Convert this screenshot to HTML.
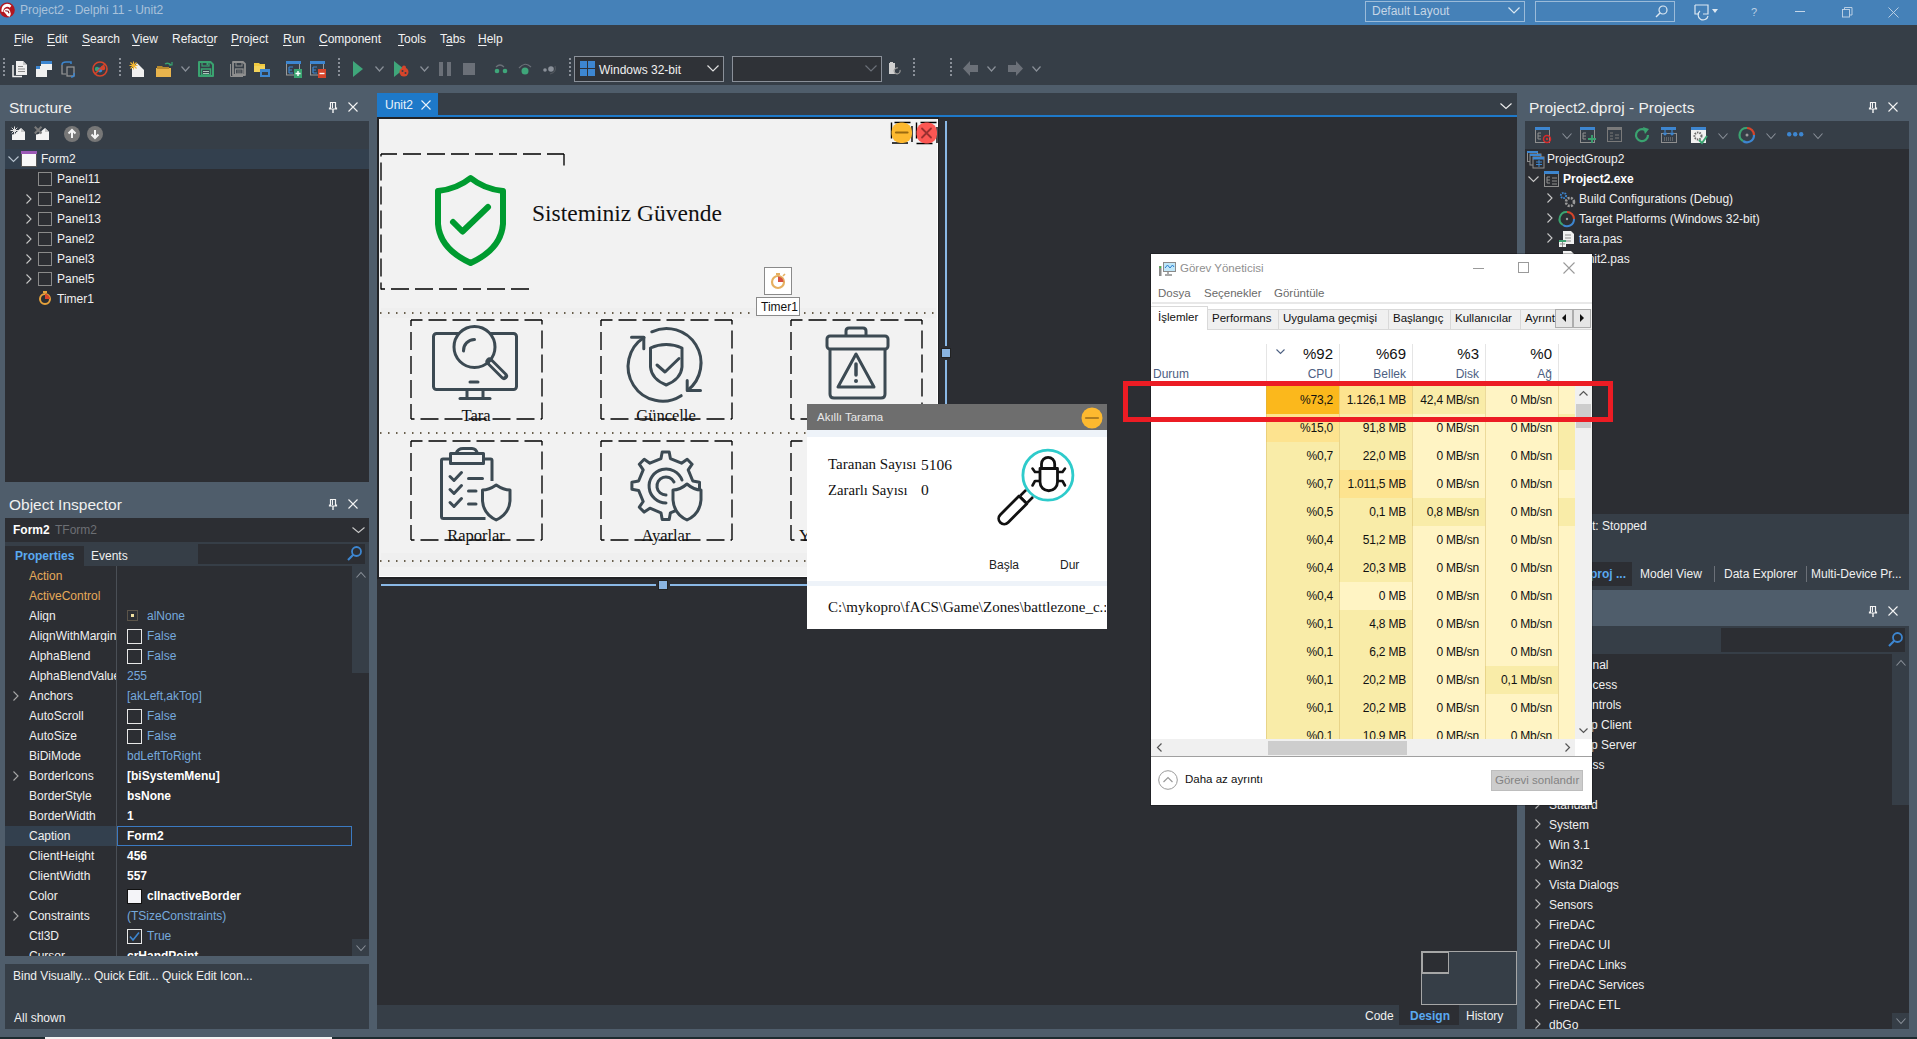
<!DOCTYPE html>
<html><head><meta charset="utf-8">
<style>
*{box-sizing:border-box;margin:0;padding:0}
html,body{width:1917px;height:1039px;overflow:hidden}
body{position:relative;background:#4f5d6b;font-family:"Liberation Sans",sans-serif;font-size:12px;color:#f0f0f0}
.a{position:absolute}
.t{position:absolute;white-space:nowrap;line-height:1}
svg{position:absolute;overflow:visible}
</style></head><body>
<div class="a" style="left:0px;top:0px;width:1917px;height:25px;background:#4581b8;"></div>
<svg style="left:0px;top:2px;" width="16" height="17" viewBox="0 0 16 17"><circle cx="7.2" cy="8" r="7.6" fill="#b3161f"/><path d="M1.3 9.5 Q1.2 2.5 7 1.8 Q10 1.8 11.4 3.8 L9.8 5.8 Q8.2 4.5 6.2 5 Q3.2 6 3.2 10 Z" fill="#fff"/><path d="M3.6 9.5 Q4.5 6.5 7.3 6.6 Q9.8 7 10.2 9.5 L10.8 12 L9.8 14.8 L7.5 14 L5.5 11.5 Z" fill="#fff"/><path d="M5.2 8.8 L8.2 9.3 L9 11.2" fill="none" stroke="#8a0d14" stroke-width="1.1"/></svg>
<div class="t" style="left:20px;top:3.84px;font-size:12px;color:#aac2da;font-weight:normal;font-family:'Liberation Sans',sans-serif;">Project2 - Delphi 11 - Unit2</div>
<div class="a" style="left:1365px;top:1px;width:160px;height:21px;border:1px solid #9bbbd9;"></div>
<div class="t" style="left:1372px;top:4.84px;font-size:12px;color:#c6d6e6;font-weight:normal;font-family:'Liberation Sans',sans-serif;">Default Layout</div>
<svg style="left:1508px;top:7px;" width="12" height="7" viewBox="0 0 12 7"><path d="M0.5 0.5 L6 6 L11.5 0.5" fill="none" stroke="#dce8f2" stroke-width="1.2"/></svg>
<div class="a" style="left:1535px;top:1px;width:140px;height:21px;border:1px solid #9bbbd9;"></div>
<svg style="left:1655px;top:5px;" width="13" height="13" viewBox="0 0 13 13"><circle cx="8" cy="5" r="4" fill="none" stroke="#dce8f2" stroke-width="1.2"/><path d="M5 8 L1 12" stroke="#dce8f2" stroke-width="1.5"/></svg>
<svg style="left:1694px;top:4px;" width="26" height="16" viewBox="0 0 26 16"><path d="M1 1 H14 V10 H9" fill="none" stroke="#dce8f2" stroke-width="1.2"/><path d="M1 1 V10 H5" fill="none" stroke="#dce8f2" stroke-width="1.2"/><path d="M6 7 A5 5 0 1 0 14 12" fill="none" stroke="#dce8f2" stroke-width="1.2"/><path d="M18 5 H24 L21 9 Z" fill="#dce8f2"/></svg>
<div class="t" style="left:1751px;top:6.69px;font-size:11px;color:#bcd0e4;font-weight:normal;font-family:'Liberation Sans',sans-serif;">?</div>
<div class="a" style="left:1795px;top:11px;width:10px;height:1px;background:#c4d6e8;"></div>
<svg style="left:1842px;top:7px;" width="11" height="11" viewBox="0 0 11 11"><rect x="0.5" y="2.5" width="7" height="7.5" fill="none" stroke="#c4d6e8" stroke-width="0.9"/><path d="M2.5 2.5 V0.5 H10 V8 H7.5" fill="none" stroke="#c4d6e8" stroke-width="0.9"/></svg>
<svg style="left:1888px;top:7px;" width="11" height="11" viewBox="0 0 11 11"><path d="M0.5 0.5 L10.5 10.5 M10.5 0.5 L0.5 10.5" stroke="#c4d6e8" stroke-width="0.9"/></svg>
<div class="a" style="left:0px;top:25px;width:1917px;height:60px;background:#363e47;"></div>
<div class="t" style="left:14px;top:32.84px;font-size:12px;color:#f2f2f2;font-weight:normal;font-family:'Liberation Sans',sans-serif;"><span style="text-decoration:underline;text-underline-offset:2px">F</span>ile</div>
<div class="t" style="left:47px;top:32.84px;font-size:12px;color:#f2f2f2;font-weight:normal;font-family:'Liberation Sans',sans-serif;"><span style="text-decoration:underline;text-underline-offset:2px">E</span>dit</div>
<div class="t" style="left:82px;top:32.84px;font-size:12px;color:#f2f2f2;font-weight:normal;font-family:'Liberation Sans',sans-serif;"><span style="text-decoration:underline;text-underline-offset:2px">S</span>earch</div>
<div class="t" style="left:132px;top:32.84px;font-size:12px;color:#f2f2f2;font-weight:normal;font-family:'Liberation Sans',sans-serif;"><span style="text-decoration:underline;text-underline-offset:2px">V</span>iew</div>
<div class="t" style="left:172px;top:32.84px;font-size:12px;color:#f2f2f2;font-weight:normal;font-family:'Liberation Sans',sans-serif;">Refact<span style="text-decoration:underline;text-underline-offset:2px">o</span>r</div>
<div class="t" style="left:231px;top:32.84px;font-size:12px;color:#f2f2f2;font-weight:normal;font-family:'Liberation Sans',sans-serif;"><span style="text-decoration:underline;text-underline-offset:2px">P</span>roject</div>
<div class="t" style="left:283px;top:32.84px;font-size:12px;color:#f2f2f2;font-weight:normal;font-family:'Liberation Sans',sans-serif;"><span style="text-decoration:underline;text-underline-offset:2px">R</span>un</div>
<div class="t" style="left:319px;top:32.84px;font-size:12px;color:#f2f2f2;font-weight:normal;font-family:'Liberation Sans',sans-serif;"><span style="text-decoration:underline;text-underline-offset:2px">C</span>omponent</div>
<div class="t" style="left:398px;top:32.84px;font-size:12px;color:#f2f2f2;font-weight:normal;font-family:'Liberation Sans',sans-serif;"><span style="text-decoration:underline;text-underline-offset:2px">T</span>ools</div>
<div class="t" style="left:440px;top:32.84px;font-size:12px;color:#f2f2f2;font-weight:normal;font-family:'Liberation Sans',sans-serif;">T<span style="text-decoration:underline;text-underline-offset:2px">a</span>bs</div>
<div class="t" style="left:478px;top:32.84px;font-size:12px;color:#f2f2f2;font-weight:normal;font-family:'Liberation Sans',sans-serif;"><span style="text-decoration:underline;text-underline-offset:2px">H</span>elp</div>
<div class="a" style="left:3px;top:58px;width:2px;height:2px;background:#8a9099;"></div>
<div class="a" style="left:3px;top:62px;width:2px;height:2px;background:#8a9099;"></div>
<div class="a" style="left:3px;top:66px;width:2px;height:2px;background:#8a9099;"></div>
<div class="a" style="left:3px;top:70px;width:2px;height:2px;background:#8a9099;"></div>
<div class="a" style="left:3px;top:74px;width:2px;height:2px;background:#8a9099;"></div>
<div class="a" style="left:119px;top:58px;width:2px;height:2px;background:#8a9099;"></div>
<div class="a" style="left:119px;top:62px;width:2px;height:2px;background:#8a9099;"></div>
<div class="a" style="left:119px;top:66px;width:2px;height:2px;background:#8a9099;"></div>
<div class="a" style="left:119px;top:70px;width:2px;height:2px;background:#8a9099;"></div>
<div class="a" style="left:119px;top:74px;width:2px;height:2px;background:#8a9099;"></div>
<div class="a" style="left:338px;top:58px;width:2px;height:2px;background:#8a9099;"></div>
<div class="a" style="left:338px;top:62px;width:2px;height:2px;background:#8a9099;"></div>
<div class="a" style="left:338px;top:66px;width:2px;height:2px;background:#8a9099;"></div>
<div class="a" style="left:338px;top:70px;width:2px;height:2px;background:#8a9099;"></div>
<div class="a" style="left:338px;top:74px;width:2px;height:2px;background:#8a9099;"></div>
<div class="a" style="left:569px;top:58px;width:2px;height:2px;background:#8a9099;"></div>
<div class="a" style="left:569px;top:62px;width:2px;height:2px;background:#8a9099;"></div>
<div class="a" style="left:569px;top:66px;width:2px;height:2px;background:#8a9099;"></div>
<div class="a" style="left:569px;top:70px;width:2px;height:2px;background:#8a9099;"></div>
<div class="a" style="left:569px;top:74px;width:2px;height:2px;background:#8a9099;"></div>
<div class="a" style="left:913px;top:58px;width:2px;height:2px;background:#8a9099;"></div>
<div class="a" style="left:913px;top:62px;width:2px;height:2px;background:#8a9099;"></div>
<div class="a" style="left:913px;top:66px;width:2px;height:2px;background:#8a9099;"></div>
<div class="a" style="left:913px;top:70px;width:2px;height:2px;background:#8a9099;"></div>
<div class="a" style="left:913px;top:74px;width:2px;height:2px;background:#8a9099;"></div>
<div class="a" style="left:950px;top:58px;width:2px;height:2px;background:#8a9099;"></div>
<div class="a" style="left:950px;top:62px;width:2px;height:2px;background:#8a9099;"></div>
<div class="a" style="left:950px;top:66px;width:2px;height:2px;background:#8a9099;"></div>
<div class="a" style="left:950px;top:70px;width:2px;height:2px;background:#8a9099;"></div>
<div class="a" style="left:950px;top:74px;width:2px;height:2px;background:#8a9099;"></div>
<svg style="left:12px;top:61px;" width="16" height="16" viewBox="0 0 16 16"><path d="M1 4 V15.5 H10" fill="none" stroke="#f0f0f0" stroke-width="1.5"/><path d="M4 0 H11 L15 4 V14 H4 Z" fill="#f0f0f0"/><path d="M11 0 V4 H15" fill="#c8c8c8"/><path d="M6 5.5 H11 M6 8 H13 M6 10.5 H13" stroke="#8a8a8a" stroke-width="1"/></svg>
<svg style="left:36px;top:61px;" width="16" height="16" viewBox="0 0 16 16"><rect x="5" y="0" width="11" height="9" fill="#f0f0f0"/><rect x="5" y="0" width="11" height="3" fill="#3d86d0"/><rect x="0" y="5" width="11" height="11" fill="#f0f0f0"/><rect x="0" y="5" width="4" height="3" fill="#3d86d0"/></svg>
<svg style="left:60px;top:61px;" width="17" height="17" viewBox="0 0 17 17"><path d="M2 4 V13 H6" fill="none" stroke="#9a9a9a" stroke-width="1.2"/><path d="M2 4 Q2 1 6 1 H11 V3" fill="none" stroke="#3d86d0" stroke-width="1.5"/><rect x="7" y="6" width="7" height="9" fill="none" stroke="#9a9a9a" stroke-width="1.2"/><path d="M14 12 Q15 16 11 16" fill="none" stroke="#3d86d0" stroke-width="1.5"/></svg>
<svg style="left:92px;top:61px;" width="16" height="16" viewBox="0 0 16 16"><circle cx="8" cy="8" r="7" fill="none" stroke="#d6452b" stroke-width="1.6"/><circle cx="5" cy="8" r="2.2" fill="#3aa370"/><circle cx="8" cy="9" r="2.4" fill="#3d86d0"/><circle cx="11" cy="7" r="2.3" fill="#d6452b"/><path d="M3 13 L13 3" stroke="#d6452b" stroke-width="1.6"/></svg>
<svg style="left:129px;top:61px;" width="16" height="16" viewBox="0 0 16 16"><path d="M3 7 H9 L15 12 V16 H3 Z" fill="#f0f0f0"/><path d="M8 2 L15 9 V16 H3 V9" fill="#f0f0f0"/><path d="M4.5 0.5 V8.5 M0.5 4.5 H8.5 M1.5 1.5 L7.5 7.5 M7.5 1.5 L1.5 7.5" stroke="#f2b632" stroke-width="1.1"/></svg>
<svg style="left:156px;top:61px;" width="17" height="17" viewBox="0 0 17 17"><path d="M0 7 H15 V16 H0 Z" fill="#e8b44d"/><path d="M1 5 H6 L7 6 H13 V8 H1 Z" fill="#b88a2e"/><path d="M9 3 Q12 1 15 4" fill="none" stroke="#3aa370" stroke-width="1.4"/><path d="M13 4 H16 V1" fill="none" stroke="#3aa370" stroke-width="1.2"/></svg>
<svg style="left:181px;top:66px;" width="9" height="6" viewBox="0 0 9 6"><path d="M0.5 0.5 L4.5 5 L8.5 0.5" fill="none" stroke="#8a9099" stroke-width="1.2"/></svg>
<svg style="left:198px;top:61px;" width="16" height="16" viewBox="0 0 16 16"><path d="M1 1 H12.5 L15 3.5 V15 H1 Z" fill="none" stroke="#3aa370" stroke-width="2" stroke-linejoin="round"/><rect x="4" y="1" width="7" height="4" fill="none" stroke="#3aa370" stroke-width="1.2"/><rect x="8.5" y="2" width="1.5" height="2" fill="#3aa370"/><rect x="3.5" y="8" width="9" height="6" fill="none" stroke="#3aa370" stroke-width="1.5"/><path d="M5 10.5 H11 M5 12.5 H11" stroke="#c8e8d8" stroke-width="0.8"/></svg>
<svg style="left:230px;top:61px;" width="16" height="16" viewBox="0 0 16 16"><path d="M0.5 3 V15.5 H13" fill="none" stroke="#8f8f8f" stroke-width="1"/><path d="M3 1 H13 L15 3 V14 H3 Z" fill="none" stroke="#8f8f8f" stroke-width="1.8" stroke-linejoin="round"/><rect x="6" y="1.5" width="6" height="3.5" fill="none" stroke="#8f8f8f" stroke-width="1"/><rect x="5.5" y="8" width="7.5" height="5" fill="none" stroke="#8f8f8f" stroke-width="1.3"/><path d="M7 10 H11.5 M7 12 H11.5" stroke="#8f8f8f" stroke-width="0.8"/></svg>
<svg style="left:254px;top:61px;" width="16" height="16" viewBox="0 0 16 16"><path d="M0 2 H5 L6 3 H11 V11 H0 Z" fill="#f0c940"/><rect x="0" y="5" width="11" height="6" fill="#f3d35a"/><rect x="6" y="8" width="10" height="8" fill="#3d86d0"/><rect x="8" y="11" width="6" height="3" fill="#363e47"/></svg>
<svg style="left:286px;top:61px;" width="16" height="17" viewBox="0 0 16 17"><rect x="0.5" y="1" width="13" height="13" fill="none" stroke="#9a9a9a"/><rect x="0" y="0" width="15" height="3" fill="#3d86d0"/><path d="M3 6 H7 M3 9 H6 M3 12 H7 M3 6 V12" stroke="#3d86d0" stroke-width="1.2"/><rect x="8" y="8" width="8" height="9" fill="#3aa370"/><path d="M12 10 V15 M9.5 12.5 H14.5" stroke="#fff" stroke-width="1.4"/></svg>
<svg style="left:310px;top:61px;" width="16" height="17" viewBox="0 0 16 17"><rect x="0.5" y="1" width="13" height="13" fill="none" stroke="#9a9a9a"/><rect x="0" y="0" width="15" height="3" fill="#3d86d0"/><path d="M3 6 H7 M3 9 H6 M3 12 H7 M3 6 V12" stroke="#3d86d0" stroke-width="1.2"/><rect x="8" y="8" width="8" height="9" fill="#d6452b"/><path d="M9.5 12.5 H14.5" stroke="#fff" stroke-width="1.4"/></svg>
<svg style="left:353px;top:61px;" width="11" height="16" viewBox="0 0 11 16"><path d="M0 0 L10 8 L0 16 Z" fill="#3fa67a"/></svg>
<svg style="left:375px;top:66px;" width="9" height="6" viewBox="0 0 9 6"><path d="M0.5 0.5 L4.5 5 L8.5 0.5" fill="none" stroke="#8a9099" stroke-width="1.2"/></svg>
<svg style="left:394px;top:61px;" width="16" height="16" viewBox="0 0 16 16"><path d="M0 0 L10 8 L0 16 Z" fill="#3fa67a"/><circle cx="10" cy="11" r="4.5" fill="#d6452b"/><circle cx="10" cy="6.5" r="2" fill="#d6452b"/><circle cx="8.5" cy="10" r="1" fill="#363e47"/><circle cx="11.5" cy="12" r="1" fill="#363e47"/></svg>
<svg style="left:420px;top:66px;" width="9" height="6" viewBox="0 0 9 6"><path d="M0.5 0.5 L4.5 5 L8.5 0.5" fill="none" stroke="#8a9099" stroke-width="1.2"/></svg>
<div class="a" style="left:439px;top:62px;width:4px;height:14px;background:#6b7078;"></div>
<div class="a" style="left:447px;top:62px;width:4px;height:14px;background:#6b7078;"></div>
<div class="a" style="left:463px;top:63px;width:12px;height:12px;background:#6b7078;"></div>
<svg style="left:494px;top:61px;" width="15" height="16" viewBox="0 0 15 16"><circle cx="3" cy="10" r="2.3" fill="#3fa67a"/><circle cx="11" cy="10" r="2.3" fill="#3fa67a"/><path d="M2 6 Q6 2 10 6" fill="none" stroke="#6b7078" stroke-width="1.2"/></svg>
<svg style="left:518px;top:61px;" width="15" height="16" viewBox="0 0 15 16"><circle cx="7" cy="10" r="3.5" fill="#3fa67a"/><path d="M1 7 Q7 0 13 6" fill="none" stroke="#6b7078" stroke-width="1.2"/></svg>
<svg style="left:542px;top:61px;" width="15" height="16" viewBox="0 0 15 16"><circle cx="3" cy="9" r="1.8" fill="#8a9099"/><circle cx="9" cy="8" r="2.8" fill="#8a9099"/><path d="M13 5 Q15 11 8 13" fill="none" stroke="#50565d" stroke-width="1.2"/></svg>
<div class="a" style="left:574px;top:56px;width:150px;height:26px;background:#2f3237;border:1px solid #8a9099"></div>
<svg style="left:580px;top:61px;" width="16" height="16" viewBox="0 0 16 16"><rect x="0" y="0" width="7" height="7" fill="#3d86d0"/><rect x="8" y="0" width="7" height="7" fill="#3d86d0"/><rect x="0" y="8" width="7" height="7" fill="#3d86d0"/><rect x="8" y="8" width="7" height="7" fill="#3d86d0"/></svg>
<div class="t" style="left:599px;top:63.84px;font-size:12px;color:#f0f0f0;font-weight:normal;font-family:'Liberation Sans',sans-serif;">Windows 32-bit</div>
<svg style="left:707px;top:65px;" width="12" height="7" viewBox="0 0 12 7"><path d="M0.5 0.5 L6 6 L11.5 0.5" fill="none" stroke="#e0e0e0" stroke-width="1.2"/></svg>
<div class="a" style="left:732px;top:56px;width:150px;height:26px;background:#2f3237;border:1px solid #8a9099"></div>
<svg style="left:865px;top:65px;" width="12" height="7" viewBox="0 0 12 7"><path d="M0.5 0.5 L6 6 L11.5 0.5" fill="none" stroke="#6b7078" stroke-width="1.2"/></svg>
<svg style="left:889px;top:62px;" width="14" height="14" viewBox="0 0 14 14"><rect x="0" y="1" width="6" height="11" fill="#d0d0d0"/><rect x="1" y="0" width="3" height="2" fill="#d0d0d0"/><path d="M11 8 A3 3 0 1 1 9 6" fill="none" stroke="#9a9a9a" stroke-width="1.2"/></svg>
<svg style="left:963px;top:61px;" width="16" height="15" viewBox="0 0 16 15"><path d="M0 7.5 L7 0 V4 H15 V11 H7 V15 Z" fill="#6b7078"/></svg>
<svg style="left:987px;top:66px;" width="9" height="6" viewBox="0 0 9 6"><path d="M0.5 0.5 L4.5 5 L8.5 0.5" fill="none" stroke="#8a9099" stroke-width="1.2"/></svg>
<svg style="left:1007px;top:61px;" width="16" height="15" viewBox="0 0 16 15"><path d="M16 7.5 L9 0 V4 H1 V11 H9 V15 Z" fill="#6b7078"/></svg>
<svg style="left:1032px;top:66px;" width="9" height="6" viewBox="0 0 9 6"><path d="M0.5 0.5 L4.5 5 L8.5 0.5" fill="none" stroke="#8a9099" stroke-width="1.2"/></svg>
<div class="t" style="left:9px;top:99.88px;font-size:15.5px;color:#f0f0f0;font-weight:normal;font-family:'Liberation Sans',sans-serif;">Structure</div>
<svg style="left:329px;top:102px;" width="8" height="11" viewBox="0 0 8 11"><path d="M1.5 0.5 H6.5 V6 H7.5 V7 H0.5 V6 H1.5 Z" fill="none" stroke="#f4f4f4" stroke-width="1.2"/><path d="M4 7 V11" stroke="#f4f4f4" stroke-width="1.4"/><path d="M3.5 1 V6" stroke="#f4f4f4" stroke-width="1"/></svg>
<svg style="left:348px;top:102px;" width="10" height="10" viewBox="0 0 10 10"><path d="M0.5 0.5 L9.5 9.5 M9.5 0.5 L0.5 9.5" stroke="#f4f4f4" stroke-width="1.1"/></svg>
<div class="a" style="left:5px;top:121px;width:364px;height:28px;background:#363e47;"></div>
<svg style="left:10px;top:126px;" width="16" height="16" viewBox="0 0 16 16"><path d="M2 14 V8.5 Q6 8.5 8 4.5 L11 2 L15 6 V14 Z" fill="#f4f4f4"/><path d="M11 2 V6 H15 Z" fill="#c8c8c8"/><path d="M4.5 0.5 V8.5 M0.5 4.5 H8.5 M1.7 1.7 L7.3 7.3 M7.3 1.7 L1.7 7.3" stroke="#e0e0e0" stroke-width="1"/></svg>
<svg style="left:34px;top:126px;" width="16" height="16" viewBox="0 0 16 16"><path d="M2 14 V8.5 Q6 8.5 8 4.5 L11 2 L15 6 V14 Z" fill="#f4f4f4"/><path d="M11 2 V6 H15 Z" fill="#c8c8c8"/><path d="M0.8 0.8 L7.5 7.5 M7.5 0.8 L0.8 7.5" stroke="#7a7a7a" stroke-width="2"/></svg>
<svg style="left:64px;top:126px;" width="16" height="16" viewBox="0 0 16 16"><circle cx="8" cy="8" r="8" fill="#777777"/><path d="M8 12 V4 M4.5 7.5 L8 4 L11.5 7.5" fill="none" stroke="#f4f4f4" stroke-width="2"/></svg>
<svg style="left:87px;top:126px;" width="16" height="16" viewBox="0 0 16 16"><circle cx="8" cy="8" r="8" fill="#777777"/><path d="M8 4 V12 M4.5 8.5 L8 12 L11.5 8.5" fill="none" stroke="#f4f4f4" stroke-width="2"/></svg>
<div class="a" style="left:5px;top:149px;width:364px;height:333px;background:#2c2e33;"></div>
<div class="a" style="left:5px;top:149px;width:364px;height:20px;background:#33404e;"></div>
<svg style="left:8px;top:156px;" width="11" height="6" viewBox="0 0 11 6"><path d="M0.5 0.5 L5.5 5.5 L10.5 0.5" fill="none" stroke="#b8c4d0" stroke-width="1.1"/></svg>
<div class="a" style="left:21px;top:151px;width:16px;height:16px;background:#f8f8f8;border:1px solid #555"></div>
<div class="a" style="left:21px;top:151px;width:16px;height:3px;background:#9b59b6;"></div>
<div class="t" style="left:41px;top:152.84px;font-size:12px;color:#f0f0f0;font-weight:normal;font-family:'Liberation Sans',sans-serif;">Form2</div>
<div class="a" style="left:38px;top:172px;width:14px;height:14px;border:1px solid #8a8a8a;"></div>
<div class="t" style="left:57px;top:172.84px;font-size:12px;color:#f0f0f0;font-weight:normal;font-family:'Liberation Sans',sans-serif;">Panel11</div>
<svg style="left:26px;top:194px;" width="6" height="10" viewBox="0 0 6 10"><path d="M0.5 0.5 L5 5 L0.5 9.5" fill="none" stroke="#c8c8c8" stroke-width="1.1"/></svg>
<div class="a" style="left:38px;top:192px;width:14px;height:14px;border:1px solid #8a8a8a;"></div>
<div class="t" style="left:57px;top:192.84px;font-size:12px;color:#f0f0f0;font-weight:normal;font-family:'Liberation Sans',sans-serif;">Panel12</div>
<svg style="left:26px;top:214px;" width="6" height="10" viewBox="0 0 6 10"><path d="M0.5 0.5 L5 5 L0.5 9.5" fill="none" stroke="#c8c8c8" stroke-width="1.1"/></svg>
<div class="a" style="left:38px;top:212px;width:14px;height:14px;border:1px solid #8a8a8a;"></div>
<div class="t" style="left:57px;top:212.84px;font-size:12px;color:#f0f0f0;font-weight:normal;font-family:'Liberation Sans',sans-serif;">Panel13</div>
<svg style="left:26px;top:234px;" width="6" height="10" viewBox="0 0 6 10"><path d="M0.5 0.5 L5 5 L0.5 9.5" fill="none" stroke="#c8c8c8" stroke-width="1.1"/></svg>
<div class="a" style="left:38px;top:232px;width:14px;height:14px;border:1px solid #8a8a8a;"></div>
<div class="t" style="left:57px;top:232.84px;font-size:12px;color:#f0f0f0;font-weight:normal;font-family:'Liberation Sans',sans-serif;">Panel2</div>
<svg style="left:26px;top:254px;" width="6" height="10" viewBox="0 0 6 10"><path d="M0.5 0.5 L5 5 L0.5 9.5" fill="none" stroke="#c8c8c8" stroke-width="1.1"/></svg>
<div class="a" style="left:38px;top:252px;width:14px;height:14px;border:1px solid #8a8a8a;"></div>
<div class="t" style="left:57px;top:252.84px;font-size:12px;color:#f0f0f0;font-weight:normal;font-family:'Liberation Sans',sans-serif;">Panel3</div>
<svg style="left:26px;top:274px;" width="6" height="10" viewBox="0 0 6 10"><path d="M0.5 0.5 L5 5 L0.5 9.5" fill="none" stroke="#c8c8c8" stroke-width="1.1"/></svg>
<div class="a" style="left:38px;top:272px;width:14px;height:14px;border:1px solid #8a8a8a;"></div>
<div class="t" style="left:57px;top:272.84px;font-size:12px;color:#f0f0f0;font-weight:normal;font-family:'Liberation Sans',sans-serif;">Panel5</div>
<svg style="left:38px;top:291px;" width="14" height="14" viewBox="0 0 14 14"><circle cx="7" cy="8" r="5" fill="none" stroke="#e6a23c" stroke-width="2"/><path d="M7 8 V3 A5 5 0 0 1 12 8 Z" fill="#d6452b"/><rect x="5" y="0" width="4" height="2" fill="#e6a23c"/></svg>
<div class="t" style="left:57px;top:292.84px;font-size:12px;color:#f0f0f0;font-weight:normal;font-family:'Liberation Sans',sans-serif;">Timer1</div>
<div class="t" style="left:9px;top:496.88px;font-size:15.5px;color:#f0f0f0;font-weight:normal;font-family:'Liberation Sans',sans-serif;">Object Inspector</div>
<svg style="left:329px;top:499px;" width="8" height="11" viewBox="0 0 8 11"><path d="M1.5 0.5 H6.5 V6 H7.5 V7 H0.5 V6 H1.5 Z" fill="none" stroke="#f4f4f4" stroke-width="1.2"/><path d="M4 7 V11" stroke="#f4f4f4" stroke-width="1.4"/><path d="M3.5 1 V6" stroke="#f4f4f4" stroke-width="1"/></svg>
<svg style="left:348px;top:499px;" width="10" height="10" viewBox="0 0 10 10"><path d="M0.5 0.5 L9.5 9.5 M9.5 0.5 L0.5 9.5" stroke="#f4f4f4" stroke-width="1.1"/></svg>
<div class="a" style="left:5px;top:518px;width:364px;height:24px;background:#2c2e33;"></div>
<div class="t" style="left:13px;top:523.84px;font-size:12px;color:#ffffff;font-weight:bold;font-family:'Liberation Sans',sans-serif;">Form2</div>
<div class="t" style="left:55px;top:523.84px;font-size:12px;color:#6c6f74;font-weight:normal;font-family:'Liberation Sans',sans-serif;">TForm2</div>
<svg style="left:352px;top:527px;" width="13" height="6" viewBox="0 0 13 6"><path d="M0.5 0.5 L6.5 5.5 L12.5 0.5" fill="none" stroke="#c8c8c8" stroke-width="1.1"/></svg>
<div class="a" style="left:5px;top:542px;width:364px;height:24px;background:#363e47;"></div>
<div class="a" style="left:5px;top:546px;width:79px;height:20px;background:#2c2e33;"></div>
<div class="t" style="left:15px;top:549.84px;font-size:12px;color:#5aa9f0;font-weight:bold;font-family:'Liberation Sans',sans-serif;">Properties</div>
<div class="t" style="left:91px;top:549.84px;font-size:12px;color:#f0f0f0;font-weight:normal;font-family:'Liberation Sans',sans-serif;">Events</div>
<div class="a" style="left:198px;top:544px;width:167px;height:20px;background:#2c2e33;"></div>
<svg style="left:347px;top:546px;" width="15" height="15" viewBox="0 0 15 15"><circle cx="9.5" cy="5.5" r="4.5" fill="none" stroke="#3d86d0" stroke-width="1.8"/><path d="M6.5 8.5 L1 14" stroke="#3d86d0" stroke-width="2.2"/></svg>
<div class="a" style="left:5px;top:566px;width:364px;height:390px;background:#2c2e33;"></div>
<div class="a" style="left:116px;top:566px;width:1px;height:390px;background:#4a4f56;"></div>
<div class="a" style="left:352px;top:566px;width:17px;height:107px;background:#363e47;"></div>
<svg style="left:356px;top:572px;" width="10" height="6" viewBox="0 0 10 6"><path d="M0.5 5.5 L5.0 0.5 L9.5 5.5" fill="none" stroke="#8a9099" stroke-width="1.1"/></svg>
<div class="a" style="left:352px;top:939px;width:17px;height:17px;background:#363e47;"></div>
<svg style="left:356px;top:945px;" width="10" height="6" viewBox="0 0 10 6"><path d="M0.5 0.5 L5.0 5.5 L9.5 0.5" fill="none" stroke="#8a9099" stroke-width="1.1"/></svg>
<div class="a" style="left:5px;top:566px;width:347px;height:390px;overflow:hidden">
<div class="t" style="left:24px;top:3.84px;font-size:12px;color:#e6aa5a;font-weight:normal;font-family:'Liberation Sans',sans-serif;width:87px;overflow:hidden">Action</div>
<div class="t" style="left:24px;top:23.84px;font-size:12px;color:#e6aa5a;font-weight:normal;font-family:'Liberation Sans',sans-serif;width:87px;overflow:hidden">ActiveControl</div>
<div class="t" style="left:24px;top:43.84px;font-size:12px;color:#f0f0f0;font-weight:normal;font-family:'Liberation Sans',sans-serif;width:87px;overflow:hidden">Align</div>
<svg style="left:122px;top:44px;" width="11" height="11" viewBox="0 0 11 11"><rect x="0.5" y="0.5" width="10" height="10" fill="none" stroke="#8a7a60" stroke-dasharray="1 1"/><rect x="4" y="4" width="3" height="3" fill="#f0e0a0"/></svg>
<div class="t" style="left:142px;top:43.84px;font-size:12px;color:#76a9dc;font-weight:normal;font-family:'Liberation Sans',sans-serif;">alNone</div>
<div class="t" style="left:24px;top:63.84px;font-size:12px;color:#f0f0f0;font-weight:normal;font-family:'Liberation Sans',sans-serif;width:87px;overflow:hidden">AlignWithMargins</div>
<div class="a" style="left:122px;top:63px;width:15px;height:15px;border:1px solid #e8e8e8;"></div>
<div class="t" style="left:142px;top:63.84px;font-size:12px;color:#76a9dc;font-weight:normal;font-family:'Liberation Sans',sans-serif;">False</div>
<div class="t" style="left:24px;top:83.84px;font-size:12px;color:#f0f0f0;font-weight:normal;font-family:'Liberation Sans',sans-serif;width:87px;overflow:hidden">AlphaBlend</div>
<div class="a" style="left:122px;top:83px;width:15px;height:15px;border:1px solid #e8e8e8;"></div>
<div class="t" style="left:142px;top:83.84px;font-size:12px;color:#76a9dc;font-weight:normal;font-family:'Liberation Sans',sans-serif;">False</div>
<div class="t" style="left:24px;top:103.84px;font-size:12px;color:#f0f0f0;font-weight:normal;font-family:'Liberation Sans',sans-serif;width:87px;overflow:hidden">AlphaBlendValue</div>
<div class="t" style="left:122px;top:103.84px;font-size:12px;color:#76a9dc;font-weight:normal;font-family:'Liberation Sans',sans-serif;">255</div>
<svg style="left:8px;top:125px;" width="6" height="10" viewBox="0 0 6 10"><path d="M0.5 0.5 L5 5 L0.5 9.5" fill="none" stroke="#a8a8a8" stroke-width="1.1"/></svg>
<div class="t" style="left:24px;top:123.84px;font-size:12px;color:#f0f0f0;font-weight:normal;font-family:'Liberation Sans',sans-serif;width:87px;overflow:hidden">Anchors</div>
<div class="t" style="left:122px;top:123.84px;font-size:12px;color:#76a9dc;font-weight:normal;font-family:'Liberation Sans',sans-serif;">[akLeft,akTop]</div>
<div class="t" style="left:24px;top:143.84px;font-size:12px;color:#f0f0f0;font-weight:normal;font-family:'Liberation Sans',sans-serif;width:87px;overflow:hidden">AutoScroll</div>
<div class="a" style="left:122px;top:143px;width:15px;height:15px;border:1px solid #e8e8e8;"></div>
<div class="t" style="left:142px;top:143.84px;font-size:12px;color:#76a9dc;font-weight:normal;font-family:'Liberation Sans',sans-serif;">False</div>
<div class="t" style="left:24px;top:163.84px;font-size:12px;color:#f0f0f0;font-weight:normal;font-family:'Liberation Sans',sans-serif;width:87px;overflow:hidden">AutoSize</div>
<div class="a" style="left:122px;top:163px;width:15px;height:15px;border:1px solid #e8e8e8;"></div>
<div class="t" style="left:142px;top:163.84px;font-size:12px;color:#76a9dc;font-weight:normal;font-family:'Liberation Sans',sans-serif;">False</div>
<div class="t" style="left:24px;top:183.84px;font-size:12px;color:#f0f0f0;font-weight:normal;font-family:'Liberation Sans',sans-serif;width:87px;overflow:hidden">BiDiMode</div>
<div class="t" style="left:122px;top:183.84px;font-size:12px;color:#76a9dc;font-weight:normal;font-family:'Liberation Sans',sans-serif;">bdLeftToRight</div>
<svg style="left:8px;top:205px;" width="6" height="10" viewBox="0 0 6 10"><path d="M0.5 0.5 L5 5 L0.5 9.5" fill="none" stroke="#a8a8a8" stroke-width="1.1"/></svg>
<div class="t" style="left:24px;top:203.84px;font-size:12px;color:#f0f0f0;font-weight:normal;font-family:'Liberation Sans',sans-serif;width:87px;overflow:hidden">BorderIcons</div>
<div class="t" style="left:122px;top:203.84px;font-size:12px;color:#ffffff;font-weight:bold;font-family:'Liberation Sans',sans-serif;">[biSystemMenu]</div>
<div class="t" style="left:24px;top:223.84px;font-size:12px;color:#f0f0f0;font-weight:normal;font-family:'Liberation Sans',sans-serif;width:87px;overflow:hidden">BorderStyle</div>
<div class="t" style="left:122px;top:223.84px;font-size:12px;color:#ffffff;font-weight:bold;font-family:'Liberation Sans',sans-serif;">bsNone</div>
<div class="t" style="left:24px;top:243.84px;font-size:12px;color:#f0f0f0;font-weight:normal;font-family:'Liberation Sans',sans-serif;width:87px;overflow:hidden">BorderWidth</div>
<div class="t" style="left:122px;top:243.84px;font-size:12px;color:#ffffff;font-weight:bold;font-family:'Liberation Sans',sans-serif;">1</div>
<div class="a" style="left:0px;top:260px;width:111px;height:20px;background:#33404e;"></div>
<div class="a" style="left:112px;top:260px;width:235px;height:20px;background:transparent;border:1px solid #3b7ac2"></div>
<div class="t" style="left:24px;top:263.84px;font-size:12px;color:#f0f0f0;font-weight:normal;font-family:'Liberation Sans',sans-serif;width:87px;overflow:hidden">Caption</div>
<div class="t" style="left:122px;top:263.84px;font-size:12px;color:#ffffff;font-weight:bold;font-family:'Liberation Sans',sans-serif;">Form2</div>
<div class="t" style="left:24px;top:283.84px;font-size:12px;color:#f0f0f0;font-weight:normal;font-family:'Liberation Sans',sans-serif;width:87px;overflow:hidden">ClientHeight</div>
<div class="t" style="left:122px;top:283.84px;font-size:12px;color:#ffffff;font-weight:bold;font-family:'Liberation Sans',sans-serif;">456</div>
<div class="t" style="left:24px;top:303.84px;font-size:12px;color:#f0f0f0;font-weight:normal;font-family:'Liberation Sans',sans-serif;width:87px;overflow:hidden">ClientWidth</div>
<div class="t" style="left:122px;top:303.84px;font-size:12px;color:#ffffff;font-weight:bold;font-family:'Liberation Sans',sans-serif;">557</div>
<div class="t" style="left:24px;top:323.84px;font-size:12px;color:#f0f0f0;font-weight:normal;font-family:'Liberation Sans',sans-serif;width:87px;overflow:hidden">Color</div>
<div class="a" style="left:122px;top:323px;width:15px;height:15px;background:#f4f4f8;border:1px solid #111"></div>
<div class="t" style="left:142px;top:323.84px;font-size:12px;color:#ffffff;font-weight:bold;font-family:'Liberation Sans',sans-serif;">clInactiveBorder</div>
<svg style="left:8px;top:345px;" width="6" height="10" viewBox="0 0 6 10"><path d="M0.5 0.5 L5 5 L0.5 9.5" fill="none" stroke="#a8a8a8" stroke-width="1.1"/></svg>
<div class="t" style="left:24px;top:343.84px;font-size:12px;color:#f0f0f0;font-weight:normal;font-family:'Liberation Sans',sans-serif;width:87px;overflow:hidden">Constraints</div>
<div class="t" style="left:122px;top:343.84px;font-size:12px;color:#76a9dc;font-weight:normal;font-family:'Liberation Sans',sans-serif;">(TSizeConstraints)</div>
<div class="t" style="left:24px;top:363.84px;font-size:12px;color:#f0f0f0;font-weight:normal;font-family:'Liberation Sans',sans-serif;width:87px;overflow:hidden">Ctl3D</div>
<div class="a" style="left:122px;top:363px;width:15px;height:15px;border:1px solid #e8e8e8;"></div>
<svg style="left:124px;top:365px;" width="11" height="11" viewBox="0 0 11 11"><path d="M1 5.5 L4 9 L10 1.5" fill="none" stroke="#3d86d0" stroke-width="1.6"/></svg>
<div class="t" style="left:142px;top:363.84px;font-size:12px;color:#76a9dc;font-weight:normal;font-family:'Liberation Sans',sans-serif;">True</div>
<div class="t" style="left:24px;top:383.84px;font-size:12px;color:#f0f0f0;font-weight:normal;font-family:'Liberation Sans',sans-serif;width:87px;overflow:hidden">Cursor</div>
<div class="t" style="left:122px;top:383.84px;font-size:12px;color:#ffffff;font-weight:bold;font-family:'Liberation Sans',sans-serif;">crHandPoint</div>
</div>
<div class="a" style="left:5px;top:964px;width:364px;height:65px;background:#363e47;"></div>
<div class="t" style="left:13px;top:969.84px;font-size:12px;color:#f0f0f0;font-weight:normal;font-family:'Liberation Sans',sans-serif;">Bind Visually...  Quick Edit...  Quick Edit Icon...</div>
<div class="t" style="left:14px;top:1011.84px;font-size:12px;color:#f0f0f0;font-weight:normal;font-family:'Liberation Sans',sans-serif;">All shown</div>
<div class="a" style="left:0px;top:1037px;width:1917px;height:2px;background:#1d2b30;"></div>
<div class="a" style="left:45px;top:1037px;width:287px;height:2px;background:#f4f4f4;"></div>
<div class="a" style="left:377px;top:93px;width:1140px;height:24px;background:#363e47;"></div>
<div class="a" style="left:377px;top:93px;width:61px;height:22px;background:#1e79c9;"></div>
<div class="t" style="left:385px;top:98.84px;font-size:12px;color:#eaf2fa;font-weight:normal;font-family:'Liberation Sans',sans-serif;">Unit2</div>
<svg style="left:421px;top:100px;" width="10" height="10" viewBox="0 0 10 10"><path d="M0.5 0.5 L9.5 9.5 M9.5 0.5 L0.5 9.5" stroke="#eaf2fa" stroke-width="1.1"/></svg>
<div class="a" style="left:377px;top:115px;width:1140px;height:2px;background:#1e79c9;"></div>
<svg style="left:1500px;top:103px;" width="12" height="6" viewBox="0 0 12 6"><path d="M0.5 0.5 L6.0 5.5 L11.5 0.5" fill="none" stroke="#f0f0f0" stroke-width="1.1"/></svg>
<div class="a" style="left:377px;top:117px;width:1140px;height:888px;background:#2c2e33;"></div>
<div class="a" style="left:377px;top:117px;width:562px;height:462px;background:#222326;"></div>
<div class="a" style="left:377px;top:1005px;width:1140px;height:24px;background:#363e47;"></div>
<div class="t" style="left:1365px;top:1009.84px;font-size:12px;color:#f0f0f0;font-weight:normal;font-family:'Liberation Sans',sans-serif;">Code</div>
<div class="a" style="left:1399px;top:1005px;width:60px;height:20px;background:#2c2e33;"></div>
<div class="t" style="left:1410px;top:1009.84px;font-size:12px;color:#5aa9f0;font-weight:bold;font-family:'Liberation Sans',sans-serif;">Design</div>
<div class="t" style="left:1466px;top:1009.84px;font-size:12px;color:#f0f0f0;font-weight:normal;font-family:'Liberation Sans',sans-serif;">History</div>
<div class="a" style="left:1421px;top:951px;width:96px;height:54px;background:#363e47;border:1px solid #a6a6a6"></div>
<div class="a" style="left:1421px;top:951px;width:28px;height:23px;background:#2c2e33;border:2px solid #a6a6a6;border-right-width:1px;border-bottom-width:2px"></div>
<div class="t" style="left:1529px;top:99.88px;font-size:15.5px;color:#f0f0f0;font-weight:normal;font-family:'Liberation Sans',sans-serif;">Project2.dproj - Projects</div>
<svg style="left:1869px;top:102px;" width="8" height="11" viewBox="0 0 8 11"><path d="M1.5 0.5 H6.5 V6 H7.5 V7 H0.5 V6 H1.5 Z" fill="none" stroke="#f4f4f4" stroke-width="1.2"/><path d="M4 7 V11" stroke="#f4f4f4" stroke-width="1.4"/><path d="M3.5 1 V6" stroke="#f4f4f4" stroke-width="1"/></svg>
<svg style="left:1888px;top:102px;" width="10" height="10" viewBox="0 0 10 10"><path d="M0.5 0.5 L9.5 9.5 M9.5 0.5 L0.5 9.5" stroke="#f4f4f4" stroke-width="1.1"/></svg>
<div class="a" style="left:1525px;top:121px;width:384px;height:28px;background:#363e47;"></div>
<svg style="left:1535px;top:127px;" width="17" height="17" viewBox="0 0 17 17"><rect x="0.5" y="1.5" width="14" height="14" fill="none" stroke="#8f8f8f"/><rect x="0" y="0" width="15" height="3" fill="#3d86d0"/><path d="M3 6 H6 M3 9 H6 M3 12 H6 M3 6 V12" stroke="#8f8f8f" stroke-width="1"/><circle cx="12" cy="12" r="3.5" fill="none" stroke="#d62b2b" stroke-width="1.5"/><circle cx="12" cy="12" r="1.2" fill="#d62b2b"/></svg>
<svg style="left:1562px;top:133px;" width="10" height="6" viewBox="0 0 10 6"><path d="M0.5 0.5 L5.0 5.5 L9.5 0.5" fill="none" stroke="#8a9099" stroke-width="1.1"/></svg>
<svg style="left:1580px;top:127px;" width="17" height="17" viewBox="0 0 17 17"><rect x="0.5" y="1.5" width="14" height="14" fill="none" stroke="#8f8f8f"/><rect x="0" y="0" width="15" height="3" fill="#3d86d0"/><path d="M3 6 H6 M3 9 H6 M3 12 H6 M3 6 V12" stroke="#8f8f8f" stroke-width="1"/><path d="M12 8 V16 M8 12 H16" stroke="#3aa370" stroke-width="1.8"/></svg>
<svg style="left:1607px;top:127px;" width="17" height="17" viewBox="0 0 17 17"><rect x="0.5" y="1.5" width="14" height="13" fill="none" stroke="#7a7a7a"/><rect x="0" y="0" width="15" height="3" fill="#7a7a7a"/><path d="M3 6 H6 M3 9 H6 M3 12 H6" stroke="#7a7a7a"/><path d="M8 8 H12 M8 11 H12" stroke="#7a7a7a"/></svg>
<svg style="left:1634px;top:127px;" width="17" height="17" viewBox="0 0 17 17"><path d="M14 8 A6 6 0 1 1 11 3" fill="none" stroke="#3aa370" stroke-width="2.2"/><path d="M9 0 L15 2 L11 7 Z" fill="#3aa370"/></svg>
<svg style="left:1661px;top:127px;" width="17" height="17" viewBox="0 0 17 17"><rect x="0.5" y="6.5" width="15" height="9" fill="none" stroke="#8f8f8f"/><rect x="0" y="0" width="15" height="3" fill="#3d86d0"/><path d="M4 3 V8 M2 6 L4 8 L6 6 M11 3 V8 M9 6 L11 8 L13 6" fill="none" stroke="#3d86d0" stroke-width="1.2"/><path d="M3 11 H13 M3 13 H13" stroke="#8f8f8f" stroke-dasharray="1 1"/></svg>
<svg style="left:1691px;top:127px;" width="17" height="17" viewBox="0 0 17 17"><rect x="0" y="1" width="15" height="15" fill="#f0f0f0"/><rect x="0" y="0" width="15" height="3" fill="#3d86d0"/><circle cx="7" cy="9" r="3.5" fill="none" stroke="#6b6b6b" stroke-width="2" stroke-dasharray="1.5 1"/><path d="M8 13 L11 16 L16 9" fill="none" stroke="#3aa370" stroke-width="2"/></svg>
<svg style="left:1718px;top:133px;" width="10" height="6" viewBox="0 0 10 6"><path d="M0.5 0.5 L5.0 5.5 L9.5 0.5" fill="none" stroke="#8a9099" stroke-width="1.1"/></svg>
<svg style="left:1739px;top:127px;" width="17" height="17" viewBox="0 0 17 17"><path d="M8 1 A7 7 0 0 1 15 8" fill="none" stroke="#d6452b" stroke-width="2.2"/><path d="M15 8 A7 7 0 0 1 4 14" fill="none" stroke="#3d86d0" stroke-width="2.2"/><path d="M4 14 A7 7 0 0 1 8 1" fill="none" stroke="#3aa370" stroke-width="2.2"/><circle cx="8" cy="8" r="1.5" fill="#9a9a9a"/></svg>
<svg style="left:1766px;top:133px;" width="10" height="6" viewBox="0 0 10 6"><path d="M0.5 0.5 L5.0 5.5 L9.5 0.5" fill="none" stroke="#8a9099" stroke-width="1.1"/></svg>
<svg style="left:1787px;top:132px;" width="5" height="5" viewBox="0 0 5 5"><circle cx="2.2" cy="2.2" r="2.2" fill="#3d86d0"/></svg>
<svg style="left:1793px;top:132px;" width="5" height="5" viewBox="0 0 5 5"><circle cx="2.2" cy="2.2" r="2.2" fill="#3d86d0"/></svg>
<svg style="left:1799px;top:132px;" width="5" height="5" viewBox="0 0 5 5"><circle cx="2.2" cy="2.2" r="2.2" fill="#3d86d0"/></svg>
<svg style="left:1813px;top:133px;" width="10" height="6" viewBox="0 0 10 6"><path d="M0.5 0.5 L5.0 5.5 L9.5 0.5" fill="none" stroke="#8a9099" stroke-width="1.1"/></svg>
<div class="a" style="left:1525px;top:149px;width:384px;height:365px;background:#2c2e33;"></div>
<svg style="left:1527px;top:151px;" width="17" height="17" viewBox="0 0 17 17"><rect x="0.5" y="0.5" width="10" height="10" fill="none" stroke="#8f8f8f"/><rect x="0" y="0" width="11" height="2" fill="#3d86d0"/><rect x="3" y="3" width="11" height="11" fill="#2c2e33" stroke="#8f8f8f"/><rect x="3" y="3" width="11" height="2" fill="#3d86d0"/><rect x="6" y="6" width="11" height="11" fill="#2c2e33" stroke="#8f8f8f"/><rect x="6" y="6" width="11" height="2.5" fill="#3d86d0"/><path d="M9 11 H15 M9 13.5 H15 M12 9 V16" stroke="#3d86d0" stroke-width="1"/></svg>
<div class="t" style="left:1547px;top:152.84px;font-size:12px;color:#f0f0f0;font-weight:normal;font-family:'Liberation Sans',sans-serif;">ProjectGroup2</div>
<svg style="left:1528px;top:176px;" width="11" height="6" viewBox="0 0 11 6"><path d="M0.5 0.5 L5.5 5.5 L10.5 0.5" fill="none" stroke="#c8c8c8" stroke-width="1.1"/></svg>
<svg style="left:1544px;top:171px;" width="17" height="17" viewBox="0 0 17 17"><rect x="0.5" y="1.5" width="14" height="14" fill="none" stroke="#8f8f8f"/><rect x="0" y="0" width="15" height="3" fill="#3d86d0"/><path d="M3 6 H6 M3 9 H6 M3 12 H6 M3 6 V12" stroke="#8f8f8f" stroke-width="1"/><path d="M8 7 H13 M8 10 H13 M8 13 H13" stroke="#8f8f8f"/></svg>
<div class="t" style="left:1563px;top:172.84px;font-size:12px;color:#ffffff;font-weight:bold;font-family:'Liberation Sans',sans-serif;">Project2.exe</div>
<svg style="left:1547px;top:193px;" width="6" height="10" viewBox="0 0 6 10"><path d="M0.5 0.5 L5 5 L0.5 9.5" fill="none" stroke="#c8c8c8" stroke-width="1.1"/></svg>
<svg style="left:1547px;top:213px;" width="6" height="10" viewBox="0 0 6 10"><path d="M0.5 0.5 L5 5 L0.5 9.5" fill="none" stroke="#c8c8c8" stroke-width="1.1"/></svg>
<svg style="left:1547px;top:233px;" width="6" height="10" viewBox="0 0 6 10"><path d="M0.5 0.5 L5 5 L0.5 9.5" fill="none" stroke="#c8c8c8" stroke-width="1.1"/></svg>
<svg style="left:1559px;top:191px;" width="17" height="17" viewBox="0 0 17 17"><circle cx="4.5" cy="4.5" r="2.6" fill="none" stroke="#3d86d0" stroke-width="2" stroke-dasharray="1.6 1"/><circle cx="11" cy="11" r="4" fill="none" stroke="#9a9a9a" stroke-width="2.6" stroke-dasharray="2 1.2"/></svg>
<div class="t" style="left:1579px;top:192.84px;font-size:12px;color:#f0f0f0;font-weight:normal;font-family:'Liberation Sans',sans-serif;">Build Configurations (Debug)</div>
<svg style="left:1559px;top:211px;" width="17" height="17" viewBox="0 0 17 17"><path d="M8 1 A7 7 0 0 1 15 8" fill="none" stroke="#d6452b" stroke-width="2"/><path d="M15 8 A7 7 0 0 1 4 14" fill="none" stroke="#3d86d0" stroke-width="2"/><path d="M4 14 A7 7 0 0 1 8 1" fill="none" stroke="#3aa370" stroke-width="2"/><circle cx="8" cy="8" r="1.2" fill="#9a9a9a"/></svg>
<div class="t" style="left:1579px;top:212.84px;font-size:12px;color:#f0f0f0;font-weight:normal;font-family:'Liberation Sans',sans-serif;">Target Platforms (Windows 32-bit)</div>
<svg style="left:1559px;top:231px;" width="16" height="17" viewBox="0 0 16 17"><path d="M4 0 H12 L15 3 V13 H4 Z" fill="#f0f0f0"/><path d="M6 4 H12 M6 7 H12 M6 10 H12" stroke="#8a8a8a"/><rect x="0" y="9" width="7" height="7" fill="#f0f0f0"/><rect x="0" y="9" width="7" height="2" fill="#3aa370"/><path d="M1 13 H6 M3.5 11 V16" stroke="#8a8a8a"/></svg>
<div class="t" style="left:1579px;top:232.84px;font-size:12px;color:#f0f0f0;font-weight:normal;font-family:'Liberation Sans',sans-serif;">tara.pas</div>
<svg style="left:1559px;top:251px;" width="16" height="17" viewBox="0 0 16 17"><path d="M4 0 H12 L15 3 V13 H4 Z" fill="#f0f0f0"/></svg>
<div class="t" style="left:1579px;top:252.84px;font-size:12px;color:#f0f0f0;font-weight:normal;font-family:'Liberation Sans',sans-serif;">Unit2.pas</div>
<div class="a" style="left:1525px;top:514px;width:384px;height:76px;background:#363e47;"></div>
<div class="t" style="left:1592px;top:519.84px;font-size:12px;color:#f0f0f0;font-weight:normal;font-family:'Liberation Sans',sans-serif;">t: Stopped</div>
<div class="a" style="left:1525px;top:562px;width:107px;height:24px;background:#2c2e33;"></div>
<div class="t" style="left:1590px;top:567.84px;font-size:12px;color:#5aa9f0;font-weight:bold;font-family:'Liberation Sans',sans-serif;">proj ...</div>
<div class="t" style="left:1640px;top:567.84px;font-size:12px;color:#f0f0f0;font-weight:normal;font-family:'Liberation Sans',sans-serif;">Model View</div>
<div class="a" style="left:1714px;top:566px;width:1px;height:16px;background:#6b7078;"></div>
<div class="t" style="left:1724px;top:567.84px;font-size:12px;color:#f0f0f0;font-weight:normal;font-family:'Liberation Sans',sans-serif;">Data Explorer</div>
<div class="a" style="left:1806px;top:566px;width:1px;height:16px;background:#6b7078;"></div>
<div class="t" style="left:1811px;top:567.84px;font-size:12px;color:#f0f0f0;font-weight:normal;font-family:'Liberation Sans',sans-serif;">Multi-Device Pr...</div>
<svg style="left:1869px;top:606px;" width="8" height="11" viewBox="0 0 8 11"><path d="M1.5 0.5 H6.5 V6 H7.5 V7 H0.5 V6 H1.5 Z" fill="none" stroke="#f4f4f4" stroke-width="1.2"/><path d="M4 7 V11" stroke="#f4f4f4" stroke-width="1.4"/><path d="M3.5 1 V6" stroke="#f4f4f4" stroke-width="1"/></svg>
<svg style="left:1888px;top:606px;" width="10" height="10" viewBox="0 0 10 10"><path d="M0.5 0.5 L9.5 9.5 M9.5 0.5 L0.5 9.5" stroke="#f4f4f4" stroke-width="1.1"/></svg>
<div class="a" style="left:1525px;top:626px;width:384px;height:28px;background:#363e47;"></div>
<div class="a" style="left:1721px;top:628px;width:184px;height:24px;background:#2c2e33;"></div>
<svg style="left:1888px;top:632px;" width="15" height="15" viewBox="0 0 15 15"><circle cx="9.5" cy="5.5" r="4.5" fill="none" stroke="#3d86d0" stroke-width="1.8"/><path d="M6.5 8.5 L1 14" stroke="#3d86d0" stroke-width="2.2"/></svg>
<div class="a" style="left:1525px;top:654px;width:384px;height:375px;background:#2c2e33;"></div>
<div class="a" style="left:1892px;top:654px;width:17px;height:151px;background:#363e47;"></div>
<svg style="left:1896px;top:660px;" width="10" height="6" viewBox="0 0 10 6"><path d="M0.5 5.5 L5.0 0.5 L9.5 5.5" fill="none" stroke="#8a9099" stroke-width="1.1"/></svg>
<div class="a" style="left:1892px;top:1013px;width:17px;height:16px;background:#363e47;"></div>
<svg style="left:1896px;top:1018px;" width="10" height="6" viewBox="0 0 10 6"><path d="M0.5 0.5 L5.0 5.5 L9.5 0.5" fill="none" stroke="#8a9099" stroke-width="1.1"/></svg>
<div class="a" style="left:1525px;top:654px;width:367px;height:375px;overflow:hidden">
<svg style="left:10px;top:5px;" width="6" height="10" viewBox="0 0 6 10"><path d="M0.5 0.5 L5 5 L0.5 9.5" fill="none" stroke="#b8b8b8" stroke-width="1.1"/></svg>
<div class="t" style="left:67.5px;top:4.84px;font-size:12px;color:#f0f0f0;font-weight:normal;font-family:'Liberation Sans',sans-serif;">nal</div>
<svg style="left:10px;top:25px;" width="6" height="10" viewBox="0 0 6 10"><path d="M0.5 0.5 L5 5 L0.5 9.5" fill="none" stroke="#b8b8b8" stroke-width="1.1"/></svg>
<div class="t" style="left:67.5px;top:24.84px;font-size:12px;color:#f0f0f0;font-weight:normal;font-family:'Liberation Sans',sans-serif;">cess</div>
<svg style="left:10px;top:45px;" width="6" height="10" viewBox="0 0 6 10"><path d="M0.5 0.5 L5 5 L0.5 9.5" fill="none" stroke="#b8b8b8" stroke-width="1.1"/></svg>
<div class="t" style="left:67px;top:44.84px;font-size:12px;color:#f0f0f0;font-weight:normal;font-family:'Liberation Sans',sans-serif;">ntrols</div>
<svg style="left:10px;top:65px;" width="6" height="10" viewBox="0 0 6 10"><path d="M0.5 0.5 L5 5 L0.5 9.5" fill="none" stroke="#b8b8b8" stroke-width="1.1"/></svg>
<div class="t" style="left:66px;top:64.84px;font-size:12px;color:#f0f0f0;font-weight:normal;font-family:'Liberation Sans',sans-serif;">p Client</div>
<svg style="left:10px;top:85px;" width="6" height="10" viewBox="0 0 6 10"><path d="M0.5 0.5 L5 5 L0.5 9.5" fill="none" stroke="#b8b8b8" stroke-width="1.1"/></svg>
<div class="t" style="left:66px;top:84.84px;font-size:12px;color:#f0f0f0;font-weight:normal;font-family:'Liberation Sans',sans-serif;">p Server</div>
<svg style="left:10px;top:105px;" width="6" height="10" viewBox="0 0 6 10"><path d="M0.5 0.5 L5 5 L0.5 9.5" fill="none" stroke="#b8b8b8" stroke-width="1.1"/></svg>
<div class="t" style="left:67.5px;top:104.84px;font-size:12px;color:#f0f0f0;font-weight:normal;font-family:'Liberation Sans',sans-serif;">ss</div>
<svg style="left:10px;top:125px;" width="6" height="10" viewBox="0 0 6 10"><path d="M0.5 0.5 L5 5 L0.5 9.5" fill="none" stroke="#b8b8b8" stroke-width="1.1"/></svg>
<svg style="left:10px;top:145px;" width="6" height="10" viewBox="0 0 6 10"><path d="M0.5 0.5 L5 5 L0.5 9.5" fill="none" stroke="#b8b8b8" stroke-width="1.1"/></svg>
<div class="t" style="left:24px;top:144.84px;font-size:12px;color:#f0f0f0;font-weight:normal;font-family:'Liberation Sans',sans-serif;">Standard</div>
<svg style="left:10px;top:165px;" width="6" height="10" viewBox="0 0 6 10"><path d="M0.5 0.5 L5 5 L0.5 9.5" fill="none" stroke="#b8b8b8" stroke-width="1.1"/></svg>
<div class="t" style="left:24px;top:164.84px;font-size:12px;color:#f0f0f0;font-weight:normal;font-family:'Liberation Sans',sans-serif;">System</div>
<svg style="left:10px;top:185px;" width="6" height="10" viewBox="0 0 6 10"><path d="M0.5 0.5 L5 5 L0.5 9.5" fill="none" stroke="#b8b8b8" stroke-width="1.1"/></svg>
<div class="t" style="left:24px;top:184.84px;font-size:12px;color:#f0f0f0;font-weight:normal;font-family:'Liberation Sans',sans-serif;">Win 3.1</div>
<svg style="left:10px;top:205px;" width="6" height="10" viewBox="0 0 6 10"><path d="M0.5 0.5 L5 5 L0.5 9.5" fill="none" stroke="#b8b8b8" stroke-width="1.1"/></svg>
<div class="t" style="left:24px;top:204.84px;font-size:12px;color:#f0f0f0;font-weight:normal;font-family:'Liberation Sans',sans-serif;">Win32</div>
<svg style="left:10px;top:225px;" width="6" height="10" viewBox="0 0 6 10"><path d="M0.5 0.5 L5 5 L0.5 9.5" fill="none" stroke="#b8b8b8" stroke-width="1.1"/></svg>
<div class="t" style="left:24px;top:224.84px;font-size:12px;color:#f0f0f0;font-weight:normal;font-family:'Liberation Sans',sans-serif;">Vista Dialogs</div>
<svg style="left:10px;top:245px;" width="6" height="10" viewBox="0 0 6 10"><path d="M0.5 0.5 L5 5 L0.5 9.5" fill="none" stroke="#b8b8b8" stroke-width="1.1"/></svg>
<div class="t" style="left:24px;top:244.84px;font-size:12px;color:#f0f0f0;font-weight:normal;font-family:'Liberation Sans',sans-serif;">Sensors</div>
<svg style="left:10px;top:265px;" width="6" height="10" viewBox="0 0 6 10"><path d="M0.5 0.5 L5 5 L0.5 9.5" fill="none" stroke="#b8b8b8" stroke-width="1.1"/></svg>
<div class="t" style="left:24px;top:264.84px;font-size:12px;color:#f0f0f0;font-weight:normal;font-family:'Liberation Sans',sans-serif;">FireDAC</div>
<svg style="left:10px;top:285px;" width="6" height="10" viewBox="0 0 6 10"><path d="M0.5 0.5 L5 5 L0.5 9.5" fill="none" stroke="#b8b8b8" stroke-width="1.1"/></svg>
<div class="t" style="left:24px;top:284.84px;font-size:12px;color:#f0f0f0;font-weight:normal;font-family:'Liberation Sans',sans-serif;">FireDAC UI</div>
<svg style="left:10px;top:305px;" width="6" height="10" viewBox="0 0 6 10"><path d="M0.5 0.5 L5 5 L0.5 9.5" fill="none" stroke="#b8b8b8" stroke-width="1.1"/></svg>
<div class="t" style="left:24px;top:304.84px;font-size:12px;color:#f0f0f0;font-weight:normal;font-family:'Liberation Sans',sans-serif;">FireDAC Links</div>
<svg style="left:10px;top:325px;" width="6" height="10" viewBox="0 0 6 10"><path d="M0.5 0.5 L5 5 L0.5 9.5" fill="none" stroke="#b8b8b8" stroke-width="1.1"/></svg>
<div class="t" style="left:24px;top:324.84px;font-size:12px;color:#f0f0f0;font-weight:normal;font-family:'Liberation Sans',sans-serif;">FireDAC Services</div>
<svg style="left:10px;top:345px;" width="6" height="10" viewBox="0 0 6 10"><path d="M0.5 0.5 L5 5 L0.5 9.5" fill="none" stroke="#b8b8b8" stroke-width="1.1"/></svg>
<div class="t" style="left:24px;top:344.84px;font-size:12px;color:#f0f0f0;font-weight:normal;font-family:'Liberation Sans',sans-serif;">FireDAC ETL</div>
<svg style="left:10px;top:365px;" width="6" height="10" viewBox="0 0 6 10"><path d="M0.5 0.5 L5 5 L0.5 9.5" fill="none" stroke="#b8b8b8" stroke-width="1.1"/></svg>
<div class="t" style="left:24px;top:364.84px;font-size:12px;color:#f0f0f0;font-weight:normal;font-family:'Liberation Sans',sans-serif;">dbGo</div>
</div>
<div class="a" style="left:379px;top:119px;width:559px;height:458px;background:#f2f2f2;"></div>
<div class="a" style="left:937px;top:119px;width:1px;height:458px;background:#ffffff;"></div>
<div class="a" style="left:379px;top:576px;width:559px;height:1px;background:#ffffff;"></div>
<div class="a" style="left:381px;top:308px;width:555px;height:10px;background:#efefef;"></div>
<div class="a" style="left:381px;top:553px;width:555px;height:14px;background:#efefef;"></div>
<svg style="left:380px;top:310.5px;" width="556" height="3" viewBox="0 0 556 3"><line x1="0" y1="2" x2="556" y2="2" stroke="#3e3018" stroke-width="1.5" stroke-dasharray="1.5 6.5"/></svg>
<svg style="left:380px;top:430.5px;" width="556" height="3" viewBox="0 0 556 3"><line x1="0" y1="2" x2="556" y2="2" stroke="#3e3018" stroke-width="1.5" stroke-dasharray="1.5 6.5"/></svg>
<svg style="left:380px;top:558.5px;" width="556" height="3" viewBox="0 0 556 3"><line x1="0" y1="2" x2="556" y2="2" stroke="#3e3018" stroke-width="1.5" stroke-dasharray="1.5 6.5"/></svg>
<svg style="left:378.5px;top:151.5px;" width="187.0" height="4" viewBox="0 0 187.0 4"><line x1="2" y1="2" x2="185.0" y2="2" stroke="#000" stroke-width="1.35" stroke-dasharray="18 6" stroke-dashoffset="2"/></svg>
<svg style="left:561.5px;top:151.5px;" width="4" height="15.5" viewBox="0 0 4 15.5"><line x1="2" y1="2" x2="2" y2="13.5" stroke="#000" stroke-width="1.35" stroke-dasharray="20 0" stroke-dashoffset="0"/></svg>
<svg style="left:378.5px;top:151.5px;" width="4" height="139.5" viewBox="0 0 4 139.5"><line x1="2" y1="2" x2="2" y2="137.5" stroke="#000" stroke-width="1.35" stroke-dasharray="18 6" stroke-dashoffset="15.5"/></svg>
<svg style="left:378.5px;top:286.5px;" width="155.5" height="4" viewBox="0 0 155.5 4"><line x1="2" y1="2" x2="153.5" y2="2" stroke="#000" stroke-width="1.35" stroke-dasharray="18 6" stroke-dashoffset="14"/></svg>
<svg style="left:430px;top:172px;" width="82" height="98" viewBox="0 0 82 98"><path d="M40.6 6 Q27 17 8 19 V52 Q10 77 40.6 91 Q71 77 73 52 V19 Q54 17 40.6 6 Z" fill="none" stroke="#009b30" stroke-width="6" stroke-linejoin="round"/><path d="M23 50 L32.5 59.5 L58 35" fill="none" stroke="#009b30" stroke-width="6" stroke-linecap="round" stroke-linejoin="round"/></svg>
<div class="t" style="left:532px;top:202.32px;font-size:23.5px;color:#111111;font-weight:normal;font-family:'Liberation Serif',serif;">Sisteminiz Güvende</div>
<svg style="left:890px;top:121px;" width="50" height="24" viewBox="0 0 50 24"><rect x="1.5" y="1.5" width="20.5" height="20.5" fill="none" stroke="#000" stroke-width="1.4" stroke-dasharray="16 5" stroke-dashoffset="-3"/><rect x="26.5" y="1.5" width="20.5" height="21" fill="none" stroke="#000" stroke-width="1.4" stroke-dasharray="16 5" stroke-dashoffset="-4"/></svg>
<svg style="left:891px;top:122px;" width="22" height="22" viewBox="0 0 22 22"><rect x="0.5" y="0.5" width="20.5" height="20.5" rx="9" fill="#fdb92f"/><path d="M5 10.5 H16.5" stroke="#9a6a10" stroke-width="2.2" stroke-linecap="round"/></svg>
<svg style="left:916px;top:122px;" width="22" height="22" viewBox="0 0 22 22"><rect x="0.5" y="0.5" width="20.5" height="21" rx="9" fill="#fc5753"/><path d="M6 6.5 L15 15.5 M15 6.5 L6 15.5" stroke="#9a3030" stroke-width="1.8" stroke-linecap="round"/></svg>
<div class="a" style="left:764px;top:267px;width:28px;height:28px;background:#ffffff;border:1px solid #8a8a8a"></div>
<svg style="left:769px;top:272px;" width="18" height="18" viewBox="0 0 18 18"><circle cx="9" cy="10" r="6" fill="none" stroke="#e6b060" stroke-width="2.2"/><path d="M9 10 V4.5 A5.5 5.5 0 0 1 14.5 10 Z" fill="#d65040"/><rect x="7" y="1" width="4" height="2" fill="#e6b060"/><path d="M14 4 L16 2" stroke="#e6b060" stroke-width="1.6"/></svg>
<div class="a" style="left:756px;top:297px;width:44px;height:19px;background:#ffffff;border:1px solid #8a8a8a"></div>
<div class="t" style="left:761px;top:300.84px;font-size:12px;color:#111111;font-weight:normal;font-family:'Liberation Sans',sans-serif;">Timer1</div>
<svg style="left:408.5px;top:317.5px;" width="135.0" height="4" viewBox="0 0 135.0 4"><line x1="2" y1="2" x2="133.0" y2="2" stroke="#000" stroke-width="1.35" stroke-dasharray="18 6" stroke-dashoffset="6.5"/></svg>
<svg style="left:408.5px;top:317.5px;" width="4" height="103.0" viewBox="0 0 4 103.0"><line x1="2" y1="2" x2="2" y2="101.0" stroke="#000" stroke-width="1.35" stroke-dasharray="18 6" stroke-dashoffset="12"/></svg>
<svg style="left:408.5px;top:416.5px;" width="135.0" height="4" viewBox="0 0 135.0 4"><line x1="2" y1="2" x2="133.0" y2="2" stroke="#000" stroke-width="1.35" stroke-dasharray="18 6" stroke-dashoffset="14.5"/></svg>
<svg style="left:539.5px;top:317.5px;" width="4" height="103.0" viewBox="0 0 4 103.0"><line x1="2" y1="2" x2="2" y2="101.0" stroke="#000" stroke-width="1.35" stroke-dasharray="18 6" stroke-dashoffset="13.4"/></svg>
<svg style="left:598.5px;top:317.5px;" width="135.0" height="4" viewBox="0 0 135.0 4"><line x1="2" y1="2" x2="133.0" y2="2" stroke="#000" stroke-width="1.35" stroke-dasharray="18 6" stroke-dashoffset="6.5"/></svg>
<svg style="left:598.5px;top:317.5px;" width="4" height="103.0" viewBox="0 0 4 103.0"><line x1="2" y1="2" x2="2" y2="101.0" stroke="#000" stroke-width="1.35" stroke-dasharray="18 6" stroke-dashoffset="12"/></svg>
<svg style="left:598.5px;top:416.5px;" width="135.0" height="4" viewBox="0 0 135.0 4"><line x1="2" y1="2" x2="133.0" y2="2" stroke="#000" stroke-width="1.35" stroke-dasharray="18 6" stroke-dashoffset="14.5"/></svg>
<svg style="left:729.5px;top:317.5px;" width="4" height="103.0" viewBox="0 0 4 103.0"><line x1="2" y1="2" x2="2" y2="101.0" stroke="#000" stroke-width="1.35" stroke-dasharray="18 6" stroke-dashoffset="13.4"/></svg>
<svg style="left:788.5px;top:317.5px;" width="135.0" height="4" viewBox="0 0 135.0 4"><line x1="2" y1="2" x2="133.0" y2="2" stroke="#000" stroke-width="1.35" stroke-dasharray="18 6" stroke-dashoffset="6.5"/></svg>
<svg style="left:788.5px;top:317.5px;" width="4" height="103.0" viewBox="0 0 4 103.0"><line x1="2" y1="2" x2="2" y2="101.0" stroke="#000" stroke-width="1.35" stroke-dasharray="18 6" stroke-dashoffset="12"/></svg>
<svg style="left:788.5px;top:416.5px;" width="135.0" height="4" viewBox="0 0 135.0 4"><line x1="2" y1="2" x2="133.0" y2="2" stroke="#000" stroke-width="1.35" stroke-dasharray="18 6" stroke-dashoffset="14.5"/></svg>
<svg style="left:919.5px;top:317.5px;" width="4" height="103.0" viewBox="0 0 4 103.0"><line x1="2" y1="2" x2="2" y2="101.0" stroke="#000" stroke-width="1.35" stroke-dasharray="18 6" stroke-dashoffset="13.4"/></svg>
<svg style="left:408.5px;top:438.5px;" width="135.0" height="4" viewBox="0 0 135.0 4"><line x1="2" y1="2" x2="133.0" y2="2" stroke="#000" stroke-width="1.35" stroke-dasharray="18 6" stroke-dashoffset="6.5"/></svg>
<svg style="left:408.5px;top:438.5px;" width="4" height="103.0" viewBox="0 0 4 103.0"><line x1="2" y1="2" x2="2" y2="101.0" stroke="#000" stroke-width="1.35" stroke-dasharray="18 6" stroke-dashoffset="12"/></svg>
<svg style="left:408.5px;top:537.5px;" width="135.0" height="4" viewBox="0 0 135.0 4"><line x1="2" y1="2" x2="133.0" y2="2" stroke="#000" stroke-width="1.35" stroke-dasharray="18 6" stroke-dashoffset="14.5"/></svg>
<svg style="left:539.5px;top:438.5px;" width="4" height="103.0" viewBox="0 0 4 103.0"><line x1="2" y1="2" x2="2" y2="101.0" stroke="#000" stroke-width="1.35" stroke-dasharray="18 6" stroke-dashoffset="13.4"/></svg>
<svg style="left:598.5px;top:438.5px;" width="135.0" height="4" viewBox="0 0 135.0 4"><line x1="2" y1="2" x2="133.0" y2="2" stroke="#000" stroke-width="1.35" stroke-dasharray="18 6" stroke-dashoffset="6.5"/></svg>
<svg style="left:598.5px;top:438.5px;" width="4" height="103.0" viewBox="0 0 4 103.0"><line x1="2" y1="2" x2="2" y2="101.0" stroke="#000" stroke-width="1.35" stroke-dasharray="18 6" stroke-dashoffset="12"/></svg>
<svg style="left:598.5px;top:537.5px;" width="135.0" height="4" viewBox="0 0 135.0 4"><line x1="2" y1="2" x2="133.0" y2="2" stroke="#000" stroke-width="1.35" stroke-dasharray="18 6" stroke-dashoffset="14.5"/></svg>
<svg style="left:729.5px;top:438.5px;" width="4" height="103.0" viewBox="0 0 4 103.0"><line x1="2" y1="2" x2="2" y2="101.0" stroke="#000" stroke-width="1.35" stroke-dasharray="18 6" stroke-dashoffset="13.4"/></svg>
<svg style="left:788.5px;top:438.5px;" width="135.0" height="4" viewBox="0 0 135.0 4"><line x1="2" y1="2" x2="133.0" y2="2" stroke="#000" stroke-width="1.35" stroke-dasharray="18 6" stroke-dashoffset="6.5"/></svg>
<svg style="left:788.5px;top:438.5px;" width="4" height="103.0" viewBox="0 0 4 103.0"><line x1="2" y1="2" x2="2" y2="101.0" stroke="#000" stroke-width="1.35" stroke-dasharray="18 6" stroke-dashoffset="12"/></svg>
<svg style="left:788.5px;top:537.5px;" width="135.0" height="4" viewBox="0 0 135.0 4"><line x1="2" y1="2" x2="133.0" y2="2" stroke="#000" stroke-width="1.35" stroke-dasharray="18 6" stroke-dashoffset="14.5"/></svg>
<svg style="left:919.5px;top:438.5px;" width="4" height="103.0" viewBox="0 0 4 103.0"><line x1="2" y1="2" x2="2" y2="101.0" stroke="#000" stroke-width="1.35" stroke-dasharray="18 6" stroke-dashoffset="13.4"/></svg>
<svg style="left:410px;top:319px;" width="132" height="100" viewBox="0 0 132 100"><rect x="23.5" y="14.5" width="83" height="56" rx="3" fill="none" stroke="#3c4a53" stroke-width="3"/>
<circle cx="64.5" cy="28" r="20.5" fill="#f2f2f2" stroke="#3c4a53" stroke-width="3"/>
<path d="M53.5 32 A11 11 0 0 1 64.5 20.5" fill="none" stroke="#3c4a53" stroke-width="3" stroke-linecap="round"/>
<path d="M79.5 42.5 L94 57" stroke="#3c4a53" stroke-width="8" stroke-linecap="round"/><path d="M81 44 L93.5 56.5" stroke="#f2f2f2" stroke-width="2.2" stroke-linecap="round"/>
<path d="M60 63 H68" stroke="#3c4a53" stroke-width="3" stroke-linecap="round"/>
<path d="M57 71 V79 M73 71 V79" stroke="#3c4a53" stroke-width="3"/><path d="M50 79.5 H80" stroke="#3c4a53" stroke-width="3" stroke-linecap="round"/></svg>
<svg style="left:600px;top:319px;" width="132" height="100" viewBox="0 0 132 100"><path d="M51.8 12.8 A34.5 34.5 0 0 1 88 71" fill="none" stroke="#3c4a53" stroke-width="3" stroke-linecap="round"/>
<path d="M81.2 76.7 A34.5 34.5 0 0 1 44 18.5" fill="none" stroke="#3c4a53" stroke-width="3" stroke-linecap="round"/>
<path d="M31.5 18.2 H43.8 V29.7" fill="none" stroke="#3c4a53" stroke-width="3" stroke-linecap="round" stroke-linejoin="round"/>
<path d="M87.2 61.6 V71.4 H100.5" fill="none" stroke="#3c4a53" stroke-width="3" stroke-linecap="round" stroke-linejoin="round"/>
<path d="M66.2 25.5 Q58 25.5 50.5 29 V48 Q51.5 60 66.2 66 Q81 60 82 48 V29 Q74.5 25.5 66.2 25.5 Z" fill="none" stroke="#3c4a53" stroke-width="3" stroke-linejoin="round"/>
<path d="M57 46 L65 53 L79 39.5" fill="none" stroke="#3c4a53" stroke-width="3" stroke-linecap="round" stroke-linejoin="round"/></svg>
<svg style="left:790px;top:319px;" width="132" height="100" viewBox="0 0 132 100"><rect x="37" y="17" width="61" height="13" rx="3" fill="none" stroke="#3c4a53" stroke-width="3"/>
<path d="M56 17 V12 Q56 9 59 9 H73 Q76 9 76 12 V17" fill="none" stroke="#3c4a53" stroke-width="3"/>
<path d="M40 30 V75 Q40 79 44 79 H91 Q95 79 95 75 V30" fill="none" stroke="#3c4a53" stroke-width="3"/>
<path d="M66 35 L48 68 H84 Z" fill="none" stroke="#3c4a53" stroke-width="3" stroke-linejoin="round"/>
<path d="M66 45 V56" stroke="#3c4a53" stroke-width="3.5" stroke-linecap="round"/><circle cx="66" cy="62" r="2" fill="#3c4a53"/></svg>
<svg style="left:410px;top:440px;" width="132" height="100" viewBox="0 0 132 100"><path d="M40 19 H33 Q31.5 19 31.5 20.5 V76.5 Q31.5 78.5 33.5 78.5 H75.5" fill="none" stroke="#3c4a53" stroke-width="3" stroke-linejoin="round"/>
<path d="M74 19 H80.5 Q82 19 82 20.5 V41" fill="none" stroke="#3c4a53" stroke-width="3" stroke-linejoin="round"/>
<path d="M40.5 13.5 H73.5 V23.5 H40.5 Z" fill="#f2f2f2" stroke="#3c4a53" stroke-width="3" stroke-linejoin="round"/>
<path d="M46 13.5 Q48 8.5 53 8.5 H62 Q66 8.5 67.5 13.5" fill="none" stroke="#3c4a53" stroke-width="3"/>
<path d="M40 36.5 L44 40.5 L51.5 32.5 M40 49.5 L44 53.5 L51.5 45.5 M40 62.5 L44 66.5 L51.5 58.5" fill="none" stroke="#3c4a53" stroke-width="3" stroke-linecap="round" stroke-linejoin="round"/>
<path d="M58.5 38.5 H72.5 M58.5 51 H66 M58.5 64 H66" stroke="#3c4a53" stroke-width="3" stroke-linecap="round"/>
<path d="M86.2 45 Q79 50 72.5 50 V61 Q73.5 74 86.2 80 Q99 74 100 61 V50 Q93.5 50 86.2 45 Z" fill="#f2f2f2" stroke="#3c4a53" stroke-width="3" stroke-linejoin="round"/></svg>
<svg style="left:600px;top:440px;" width="132" height="100" viewBox="0 0 132 100"><path d="M61.0 18.6 L62.2 11.9 L69.2 11.9 L70.4 18.6 L81.5 23.2 L87.2 19.3 L92.1 24.2 L88.2 29.9 L92.8 41.0 L99.5 42.2 L99.5 49.2 L92.8 50.4 L88.2 61.5 L92.1 67.2 L87.2 72.1 L81.5 68.2 L70.4 72.8 L69.2 79.5 L62.2 79.5 L61.0 72.8 L49.9 68.2 L44.2 72.1 L39.3 67.2 L43.2 61.5 L38.6 50.4 L31.9 49.2 L31.9 42.2 L38.6 41.0 L43.2 29.9 L39.3 24.2 L44.2 19.3 L49.9 23.2 Z" fill="none" stroke="#3c4a53" stroke-width="3" stroke-linejoin="round"/>
<path d="M66 63 A17 17 0 1 1 82 40" fill="none" stroke="#3c4a53" stroke-width="3" stroke-linecap="round"/>
<path d="M66 55 A9 9 0 1 1 74 42" fill="none" stroke="#3c4a53" stroke-width="3" stroke-linecap="round"/>
<path d="M87 44 Q80 50 73 50 V60 Q74 74 87 80 Q100 74 101 60 V50 Q94 50 87 44 Z" fill="#f2f2f2" stroke="#3c4a53" stroke-width="3" stroke-linejoin="round"/></svg>
<div class="t" style="left:410px;top:407.68px;font-size:16.5px;color:#111111;font-weight:normal;font-family:'Liberation Serif',serif;width:132px;text-align:center">Tara</div>
<div class="t" style="left:600px;top:407.68px;font-size:16.5px;color:#111111;font-weight:normal;font-family:'Liberation Serif',serif;width:132px;text-align:center">Güncelle</div>
<div class="t" style="left:410px;top:528.18px;font-size:16.5px;color:#111111;font-weight:normal;font-family:'Liberation Serif',serif;width:132px;text-align:center">Raporlar</div>
<div class="t" style="left:600px;top:528.18px;font-size:16.5px;color:#111111;font-weight:normal;font-family:'Liberation Serif',serif;width:132px;text-align:center">Ayarlar</div>
<div class="t" style="left:799px;top:528.18px;font-size:16.5px;color:#111111;font-weight:normal;font-family:'Liberation Serif',serif;">Yedekler</div>
<div class="a" style="left:945px;top:121px;width:2px;height:225px;background:#8ab8e6;"></div>
<div class="a" style="left:945px;top:360px;width:2px;height:226px;background:#8ab8e6;"></div>
<div class="a" style="left:942px;top:349px;width:8px;height:8px;background:#8ab4e0;outline:1px solid #222"></div>
<div class="a" style="left:381px;top:584px;width:275px;height:2px;background:#8ab8e6;"></div>
<div class="a" style="left:670px;top:584px;width:277px;height:2px;background:#8ab8e6;"></div>
<div class="a" style="left:659px;top:581px;width:8px;height:8px;background:#8ab4e0;outline:1px solid #222"></div>
<div class="a" style="left:807px;top:404px;width:300px;height:225px;background:#ffffff;"></div>
<div class="a" style="left:807px;top:404px;width:300px;height:26px;background:#6e6e6e;"></div>
<div class="t" style="left:817px;top:411.77px;font-size:11.5px;color:#e8e8e8;font-weight:normal;font-family:'Liberation Sans',sans-serif;">Akıllı Tarama</div>
<svg style="left:1081px;top:407px;" width="22" height="22" viewBox="0 0 22 22"><circle cx="11" cy="11" r="10.5" fill="#fdb92f"/><path d="M5 11 H17" stroke="#b07e20" stroke-width="2.2" stroke-linecap="round"/></svg>
<div class="a" style="left:807px;top:430px;width:300px;height:7px;background:#eef3f9;"></div>
<div class="t" style="left:828px;top:457.44px;font-size:15px;color:#111111;font-weight:normal;font-family:'Liberation Serif',serif;">Taranan Sayısı</div>
<div class="t" style="left:921px;top:457.02px;font-size:15.5px;color:#111111;font-weight:normal;font-family:'Liberation Serif',serif;">5106</div>
<div class="t" style="left:828px;top:482.69px;font-size:14.7px;color:#111111;font-weight:normal;font-family:'Liberation Serif',serif;">Zararlı Sayısı</div>
<div class="t" style="left:921px;top:482.02px;font-size:15.5px;color:#111111;font-weight:normal;font-family:'Liberation Serif',serif;">0</div>
<svg style="left:985px;top:440px;" width="100" height="100" viewBox="0 0 100 100"><circle cx="62.9" cy="35.2" r="25" fill="#ffffff" stroke="#2ecbcb" stroke-width="2.8"/>
<path d="M35.5 55.5 L41 50 M42.5 62.5 L48 57" stroke="#111" stroke-width="2.6"/><path d="M34.5 56 L42.5 64" stroke="#111" stroke-width="2.4"/>
<path d="M34.0 56.0 L15.3 74.7 A5.5 5.5 0 0 0 23.1 82.5 L41.8 63.8 Z" fill="#fff" stroke="#111" stroke-width="2.8" stroke-linejoin="round"/>
<path d="M56.5 28 V24 A6.6 6.6 0 0 1 69.7 24 V28" fill="none" stroke="#111" stroke-width="2.8"/>
<path d="M55 28.5 H72.5 V42 A8.75 8.75 0 0 1 55 42 Z" fill="none" stroke="#111" stroke-width="2.8" stroke-linejoin="round"/>
<path d="M54.5 32 H50 L47.5 28.5 M54.5 41 H50 L47.5 45.5 M73 32 H77.5 L80 28.5 M73 41 H77.5 L80 45.5" fill="none" stroke="#111" stroke-width="2.6" stroke-linecap="round" stroke-linejoin="round"/></svg>
<div class="t" style="left:989px;top:558.84px;font-size:12px;color:#222222;font-weight:normal;font-family:'Liberation Sans',sans-serif;">Başla</div>
<div class="t" style="left:1060px;top:558.84px;font-size:12px;color:#222222;font-weight:normal;font-family:'Liberation Sans',sans-serif;">Dur</div>
<div class="a" style="left:807px;top:581px;width:300px;height:5px;background:#eef3f9;"></div>
<div class="a" style="left:808px;top:590px;width:298px;height:30px;overflow:hidden">
<div class="t" style="left:20px;top:9.94px;font-size:15px;color:#111111;font-weight:normal;font-family:'Liberation Serif',serif;">C:\mykopro\fACS\Game\Zones\battlezone_c.:\</div>
</div>
<div class="a" style="left:1150px;top:253px;width:443px;height:553px;background:rgba(0,0,0,0.25);"></div>
<div class="a" style="left:1151px;top:254px;width:441px;height:551px;background:#ffffff;"></div>
<svg style="left:1159px;top:262px;" width="17" height="15" viewBox="0 0 17 15"><rect x="4.5" y="0.5" width="12" height="9" fill="#bfe6f8" stroke="#8a8a8a"/><path d="M6 6 L8.5 3 L11 6 L13.5 3 L15 5" fill="none" stroke="#2a7fd0" stroke-width="1"/><rect x="0" y="4" width="2.5" height="10" fill="#8a8a8a"/><rect x="0.5" y="4.5" width="1.5" height="1.5" fill="#30d030"/><path d="M9 10 V12 M6 13 H13" stroke="#8a8a8a" stroke-width="1.4"/></svg>
<div class="t" style="left:1180px;top:263.27px;font-size:11.5px;color:#8f8f8f;font-weight:normal;font-family:'Liberation Sans',sans-serif;">Görev Yöneticisi</div>
<div class="a" style="left:1473px;top:268px;width:11px;height:1px;background:#9a9a9a;"></div>
<div class="a" style="left:1518px;top:262px;width:11px;height:11px;border:1px solid #9a9a9a;"></div>
<svg style="left:1563px;top:262px;" width="12" height="12" viewBox="0 0 12 12"><path d="M0.5 0.5 L11.5 11.5 M11.5 0.5 L0.5 11.5" stroke="#9a9a9a" stroke-width="1.1"/></svg>
<div class="t" style="left:1158px;top:288.27px;font-size:11.5px;color:#6a6a6a;font-weight:normal;font-family:'Liberation Sans',sans-serif;">Dosya</div>
<div class="t" style="left:1204px;top:288.27px;font-size:11.5px;color:#6a6a6a;font-weight:normal;font-family:'Liberation Sans',sans-serif;">Seçenekler</div>
<div class="t" style="left:1274px;top:288.27px;font-size:11.5px;color:#6a6a6a;font-weight:normal;font-family:'Liberation Sans',sans-serif;">Görüntüle</div>
<div class="a" style="left:1152px;top:302px;width:440px;height:2px;background:#e8e8e8;"></div>
<div class="a" style="left:1151px;top:309px;width:441px;height:20px;background:#f0f0f0;"></div>
<div class="a" style="left:1151px;top:329px;width:441px;height:1px;background:#d9d9d9;"></div>
<div class="a" style="left:1151px;top:309px;width:404px;height:21px;overflow:hidden">
<div class="a" style="left:56px;top:0px;width:72px;height:21px;background:#f0f0f0;border:1px solid #d9d9d9"></div>
<div class="t" style="left:61px;top:3.77px;font-size:11.5px;color:#111111;font-weight:normal;font-family:'Liberation Sans',sans-serif;">Performans</div>
<div class="a" style="left:127px;top:0px;width:111px;height:21px;background:#f0f0f0;border:1px solid #d9d9d9"></div>
<div class="t" style="left:132px;top:3.77px;font-size:11.5px;color:#111111;font-weight:normal;font-family:'Liberation Sans',sans-serif;">Uygulama geçmişi</div>
<div class="a" style="left:237px;top:0px;width:63px;height:21px;background:#f0f0f0;border:1px solid #d9d9d9"></div>
<div class="t" style="left:242px;top:3.77px;font-size:11.5px;color:#111111;font-weight:normal;font-family:'Liberation Sans',sans-serif;">Başlangıç</div>
<div class="a" style="left:299px;top:0px;width:71px;height:21px;background:#f0f0f0;border:1px solid #d9d9d9"></div>
<div class="t" style="left:304px;top:3.77px;font-size:11.5px;color:#111111;font-weight:normal;font-family:'Liberation Sans',sans-serif;">Kullanıcılar</div>
<div class="a" style="left:369px;top:0px;width:36px;height:21px;background:#f0f0f0;border:1px solid #d9d9d9"></div>
<div class="t" style="left:374px;top:3.77px;font-size:11.5px;color:#111111;font-weight:normal;font-family:'Liberation Sans',sans-serif;">Ayrıntılar</div>
</div>
<div class="a" style="left:1151px;top:306px;width:57px;height:24px;background:#ffffff;border-top:1px solid #d9d9d9;border-right:1px solid #d9d9d9"></div>
<div class="t" style="left:1158px;top:311.77px;font-size:11.5px;color:#111111;font-weight:normal;font-family:'Liberation Sans',sans-serif;">İşlemler</div>
<div class="a" style="left:1555px;top:309px;width:18px;height:19px;background:#e6e6e6;border:1px solid #adadad"></div>
<svg style="left:1562px;top:314px;" width="5" height="9" viewBox="0 0 5 9"><path d="M4 0 L0 4 L4 8 Z" fill="#111"/></svg>
<div class="a" style="left:1573px;top:309px;width:18px;height:19px;background:#e6e6e6;border:1px solid #adadad"></div>
<svg style="left:1580px;top:314px;" width="5" height="9" viewBox="0 0 5 9"><path d="M0 0 L4 4 L0 8 Z" fill="#111"/></svg>
<div class="a" style="left:1266px;top:344px;width:1px;height:42px;background:#e5e5e5;"></div>
<div class="a" style="left:1339px;top:344px;width:1px;height:42px;background:#e5e5e5;"></div>
<div class="a" style="left:1412px;top:344px;width:1px;height:42px;background:#e5e5e5;"></div>
<div class="a" style="left:1485px;top:344px;width:1px;height:42px;background:#e5e5e5;"></div>
<div class="a" style="left:1558px;top:344px;width:1px;height:42px;background:#e5e5e5;"></div>
<div class="t" style="left:1153px;top:367.84px;font-size:12px;color:#4d6082;font-weight:normal;font-family:'Liberation Sans',sans-serif;">Durum</div>
<svg style="left:1276px;top:349px;" width="9" height="5" viewBox="0 0 9 5"><path d="M0.5 0.5 L4.5 4.5 L8.5 0.5" fill="none" stroke="#4d6082" stroke-width="1.1"/></svg>
<div class="t" style="left:1253px;top:346.00px;width:80px;text-align:right;font-size:15px;color:#111">%92</div>
<div class="t" style="left:1253px;top:367.84px;width:80px;text-align:right;font-size:12px;color:#4d6082">CPU</div>
<div class="t" style="left:1326px;top:346.00px;width:80px;text-align:right;font-size:15px;color:#111">%69</div>
<div class="t" style="left:1326px;top:367.84px;width:80px;text-align:right;font-size:12px;color:#4d6082">Bellek</div>
<div class="t" style="left:1399px;top:346.00px;width:80px;text-align:right;font-size:15px;color:#111">%3</div>
<div class="t" style="left:1399px;top:367.84px;width:80px;text-align:right;font-size:12px;color:#4d6082">Disk</div>
<div class="t" style="left:1472px;top:346.00px;width:80px;text-align:right;font-size:15px;color:#111">%0</div>
<div class="t" style="left:1472px;top:367.84px;width:80px;text-align:right;font-size:12px;color:#4d6082">Ağ</div>
<div class="a" style="left:1151px;top:386px;width:424px;height:353px;overflow:hidden">
<div class="a" style="left:115px;top:0px;width:73px;height:28px;background:#fbb81c;"></div>
<div class="a" style="left:188px;top:0px;width:73px;height:28px;background:#fde38f;"></div>
<div class="a" style="left:261px;top:0px;width:73px;height:28px;background:#f9eca8;"></div>
<div class="a" style="left:334px;top:0px;width:73px;height:28px;background:#fff4c4;"></div>
<div class="a" style="left:407px;top:0px;width:17px;height:28px;background:#fff4c4;"></div>
<div class="t" style="left:92px;top:7.84px;width:90px;text-align:right;font-size:12px;color:#111;letter-spacing:-0.2px">%73,2</div>
<div class="t" style="left:165px;top:7.84px;width:90px;text-align:right;font-size:12px;color:#111;letter-spacing:-0.2px">1.126,1 MB</div>
<div class="t" style="left:238px;top:7.84px;width:90px;text-align:right;font-size:12px;color:#111;letter-spacing:-0.2px">42,4 MB/sn</div>
<div class="t" style="left:311px;top:7.84px;width:90px;text-align:right;font-size:12px;color:#111;letter-spacing:-0.2px">0 Mb/sn</div>
<div class="a" style="left:115px;top:28px;width:73px;height:28px;background:#fde38f;"></div>
<div class="a" style="left:188px;top:28px;width:73px;height:28px;background:#f9eca8;"></div>
<div class="a" style="left:261px;top:28px;width:73px;height:28px;background:#fff4c4;"></div>
<div class="a" style="left:334px;top:28px;width:73px;height:28px;background:#fff4c4;"></div>
<div class="a" style="left:407px;top:28px;width:17px;height:28px;background:#f9eca8;"></div>
<div class="t" style="left:92px;top:35.84px;width:90px;text-align:right;font-size:12px;color:#111;letter-spacing:-0.2px">%15,0</div>
<div class="t" style="left:165px;top:35.84px;width:90px;text-align:right;font-size:12px;color:#111;letter-spacing:-0.2px">91,8 MB</div>
<div class="t" style="left:238px;top:35.84px;width:90px;text-align:right;font-size:12px;color:#111;letter-spacing:-0.2px">0 MB/sn</div>
<div class="t" style="left:311px;top:35.84px;width:90px;text-align:right;font-size:12px;color:#111;letter-spacing:-0.2px">0 Mb/sn</div>
<div class="a" style="left:115px;top:56px;width:73px;height:28px;background:#f9eca8;"></div>
<div class="a" style="left:188px;top:56px;width:73px;height:28px;background:#f9eca8;"></div>
<div class="a" style="left:261px;top:56px;width:73px;height:28px;background:#fff4c4;"></div>
<div class="a" style="left:334px;top:56px;width:73px;height:28px;background:#fff4c4;"></div>
<div class="a" style="left:407px;top:56px;width:17px;height:28px;background:#f9eca8;"></div>
<div class="t" style="left:92px;top:63.84px;width:90px;text-align:right;font-size:12px;color:#111;letter-spacing:-0.2px">%0,7</div>
<div class="t" style="left:165px;top:63.84px;width:90px;text-align:right;font-size:12px;color:#111;letter-spacing:-0.2px">22,0 MB</div>
<div class="t" style="left:238px;top:63.84px;width:90px;text-align:right;font-size:12px;color:#111;letter-spacing:-0.2px">0 MB/sn</div>
<div class="t" style="left:311px;top:63.84px;width:90px;text-align:right;font-size:12px;color:#111;letter-spacing:-0.2px">0 Mb/sn</div>
<div class="a" style="left:115px;top:84px;width:73px;height:28px;background:#f9eca8;"></div>
<div class="a" style="left:188px;top:84px;width:73px;height:28px;background:#fde38f;"></div>
<div class="a" style="left:261px;top:84px;width:73px;height:28px;background:#fff4c4;"></div>
<div class="a" style="left:334px;top:84px;width:73px;height:28px;background:#fff4c4;"></div>
<div class="a" style="left:407px;top:84px;width:17px;height:28px;background:#fff4c4;"></div>
<div class="t" style="left:92px;top:91.84px;width:90px;text-align:right;font-size:12px;color:#111;letter-spacing:-0.2px">%0,7</div>
<div class="t" style="left:165px;top:91.84px;width:90px;text-align:right;font-size:12px;color:#111;letter-spacing:-0.2px">1.011,5 MB</div>
<div class="t" style="left:238px;top:91.84px;width:90px;text-align:right;font-size:12px;color:#111;letter-spacing:-0.2px">0 MB/sn</div>
<div class="t" style="left:311px;top:91.84px;width:90px;text-align:right;font-size:12px;color:#111;letter-spacing:-0.2px">0 Mb/sn</div>
<div class="a" style="left:115px;top:112px;width:73px;height:28px;background:#f9eca8;"></div>
<div class="a" style="left:188px;top:112px;width:73px;height:28px;background:#f9eca8;"></div>
<div class="a" style="left:261px;top:112px;width:73px;height:28px;background:#f9eca8;"></div>
<div class="a" style="left:334px;top:112px;width:73px;height:28px;background:#fff4c4;"></div>
<div class="a" style="left:407px;top:112px;width:17px;height:28px;background:#f9eca8;"></div>
<div class="t" style="left:92px;top:119.84px;width:90px;text-align:right;font-size:12px;color:#111;letter-spacing:-0.2px">%0,5</div>
<div class="t" style="left:165px;top:119.84px;width:90px;text-align:right;font-size:12px;color:#111;letter-spacing:-0.2px">0,1 MB</div>
<div class="t" style="left:238px;top:119.84px;width:90px;text-align:right;font-size:12px;color:#111;letter-spacing:-0.2px">0,8 MB/sn</div>
<div class="t" style="left:311px;top:119.84px;width:90px;text-align:right;font-size:12px;color:#111;letter-spacing:-0.2px">0 Mb/sn</div>
<div class="a" style="left:115px;top:140px;width:73px;height:28px;background:#f9eca8;"></div>
<div class="a" style="left:188px;top:140px;width:73px;height:28px;background:#f9eca8;"></div>
<div class="a" style="left:261px;top:140px;width:73px;height:28px;background:#fff4c4;"></div>
<div class="a" style="left:334px;top:140px;width:73px;height:28px;background:#fff4c4;"></div>
<div class="a" style="left:407px;top:140px;width:17px;height:28px;background:#fff4c4;"></div>
<div class="t" style="left:92px;top:147.84px;width:90px;text-align:right;font-size:12px;color:#111;letter-spacing:-0.2px">%0,4</div>
<div class="t" style="left:165px;top:147.84px;width:90px;text-align:right;font-size:12px;color:#111;letter-spacing:-0.2px">51,2 MB</div>
<div class="t" style="left:238px;top:147.84px;width:90px;text-align:right;font-size:12px;color:#111;letter-spacing:-0.2px">0 MB/sn</div>
<div class="t" style="left:311px;top:147.84px;width:90px;text-align:right;font-size:12px;color:#111;letter-spacing:-0.2px">0 Mb/sn</div>
<div class="a" style="left:115px;top:168px;width:73px;height:28px;background:#f9eca8;"></div>
<div class="a" style="left:188px;top:168px;width:73px;height:28px;background:#f9eca8;"></div>
<div class="a" style="left:261px;top:168px;width:73px;height:28px;background:#fff4c4;"></div>
<div class="a" style="left:334px;top:168px;width:73px;height:28px;background:#fff4c4;"></div>
<div class="a" style="left:407px;top:168px;width:17px;height:28px;background:#fff4c4;"></div>
<div class="t" style="left:92px;top:175.84px;width:90px;text-align:right;font-size:12px;color:#111;letter-spacing:-0.2px">%0,4</div>
<div class="t" style="left:165px;top:175.84px;width:90px;text-align:right;font-size:12px;color:#111;letter-spacing:-0.2px">20,3 MB</div>
<div class="t" style="left:238px;top:175.84px;width:90px;text-align:right;font-size:12px;color:#111;letter-spacing:-0.2px">0 MB/sn</div>
<div class="t" style="left:311px;top:175.84px;width:90px;text-align:right;font-size:12px;color:#111;letter-spacing:-0.2px">0 Mb/sn</div>
<div class="a" style="left:115px;top:196px;width:73px;height:28px;background:#f9eca8;"></div>
<div class="a" style="left:188px;top:196px;width:73px;height:28px;background:#fff4c4;"></div>
<div class="a" style="left:261px;top:196px;width:73px;height:28px;background:#fff4c4;"></div>
<div class="a" style="left:334px;top:196px;width:73px;height:28px;background:#fff4c4;"></div>
<div class="a" style="left:407px;top:196px;width:17px;height:28px;background:#fff4c4;"></div>
<div class="t" style="left:92px;top:203.84px;width:90px;text-align:right;font-size:12px;color:#111;letter-spacing:-0.2px">%0,4</div>
<div class="t" style="left:165px;top:203.84px;width:90px;text-align:right;font-size:12px;color:#111;letter-spacing:-0.2px">0 MB</div>
<div class="t" style="left:238px;top:203.84px;width:90px;text-align:right;font-size:12px;color:#111;letter-spacing:-0.2px">0 MB/sn</div>
<div class="t" style="left:311px;top:203.84px;width:90px;text-align:right;font-size:12px;color:#111;letter-spacing:-0.2px">0 Mb/sn</div>
<div class="a" style="left:115px;top:224px;width:73px;height:28px;background:#f9eca8;"></div>
<div class="a" style="left:188px;top:224px;width:73px;height:28px;background:#f9eca8;"></div>
<div class="a" style="left:261px;top:224px;width:73px;height:28px;background:#fff4c4;"></div>
<div class="a" style="left:334px;top:224px;width:73px;height:28px;background:#fff4c4;"></div>
<div class="a" style="left:407px;top:224px;width:17px;height:28px;background:#fff4c4;"></div>
<div class="t" style="left:92px;top:231.84px;width:90px;text-align:right;font-size:12px;color:#111;letter-spacing:-0.2px">%0,1</div>
<div class="t" style="left:165px;top:231.84px;width:90px;text-align:right;font-size:12px;color:#111;letter-spacing:-0.2px">4,8 MB</div>
<div class="t" style="left:238px;top:231.84px;width:90px;text-align:right;font-size:12px;color:#111;letter-spacing:-0.2px">0 MB/sn</div>
<div class="t" style="left:311px;top:231.84px;width:90px;text-align:right;font-size:12px;color:#111;letter-spacing:-0.2px">0 Mb/sn</div>
<div class="a" style="left:115px;top:252px;width:73px;height:28px;background:#f9eca8;"></div>
<div class="a" style="left:188px;top:252px;width:73px;height:28px;background:#f9eca8;"></div>
<div class="a" style="left:261px;top:252px;width:73px;height:28px;background:#fff4c4;"></div>
<div class="a" style="left:334px;top:252px;width:73px;height:28px;background:#fff4c4;"></div>
<div class="a" style="left:407px;top:252px;width:17px;height:28px;background:#fff4c4;"></div>
<div class="t" style="left:92px;top:259.84px;width:90px;text-align:right;font-size:12px;color:#111;letter-spacing:-0.2px">%0,1</div>
<div class="t" style="left:165px;top:259.84px;width:90px;text-align:right;font-size:12px;color:#111;letter-spacing:-0.2px">6,2 MB</div>
<div class="t" style="left:238px;top:259.84px;width:90px;text-align:right;font-size:12px;color:#111;letter-spacing:-0.2px">0 MB/sn</div>
<div class="t" style="left:311px;top:259.84px;width:90px;text-align:right;font-size:12px;color:#111;letter-spacing:-0.2px">0 Mb/sn</div>
<div class="a" style="left:115px;top:280px;width:73px;height:28px;background:#f9eca8;"></div>
<div class="a" style="left:188px;top:280px;width:73px;height:28px;background:#f9eca8;"></div>
<div class="a" style="left:261px;top:280px;width:73px;height:28px;background:#fff4c4;"></div>
<div class="a" style="left:334px;top:280px;width:73px;height:28px;background:#f9eca8;"></div>
<div class="a" style="left:407px;top:280px;width:17px;height:28px;background:#fff4c4;"></div>
<div class="t" style="left:92px;top:287.84px;width:90px;text-align:right;font-size:12px;color:#111;letter-spacing:-0.2px">%0,1</div>
<div class="t" style="left:165px;top:287.84px;width:90px;text-align:right;font-size:12px;color:#111;letter-spacing:-0.2px">20,2 MB</div>
<div class="t" style="left:238px;top:287.84px;width:90px;text-align:right;font-size:12px;color:#111;letter-spacing:-0.2px">0 MB/sn</div>
<div class="t" style="left:311px;top:287.84px;width:90px;text-align:right;font-size:12px;color:#111;letter-spacing:-0.2px">0,1 Mb/sn</div>
<div class="a" style="left:115px;top:308px;width:73px;height:28px;background:#f9eca8;"></div>
<div class="a" style="left:188px;top:308px;width:73px;height:28px;background:#f9eca8;"></div>
<div class="a" style="left:261px;top:308px;width:73px;height:28px;background:#fff4c4;"></div>
<div class="a" style="left:334px;top:308px;width:73px;height:28px;background:#fff4c4;"></div>
<div class="a" style="left:407px;top:308px;width:17px;height:28px;background:#fff4c4;"></div>
<div class="t" style="left:92px;top:315.84px;width:90px;text-align:right;font-size:12px;color:#111;letter-spacing:-0.2px">%0,1</div>
<div class="t" style="left:165px;top:315.84px;width:90px;text-align:right;font-size:12px;color:#111;letter-spacing:-0.2px">20,2 MB</div>
<div class="t" style="left:238px;top:315.84px;width:90px;text-align:right;font-size:12px;color:#111;letter-spacing:-0.2px">0 MB/sn</div>
<div class="t" style="left:311px;top:315.84px;width:90px;text-align:right;font-size:12px;color:#111;letter-spacing:-0.2px">0 Mb/sn</div>
<div class="a" style="left:115px;top:336px;width:73px;height:28px;background:#f9eca8;"></div>
<div class="a" style="left:188px;top:336px;width:73px;height:28px;background:#f9eca8;"></div>
<div class="a" style="left:261px;top:336px;width:73px;height:28px;background:#fff4c4;"></div>
<div class="a" style="left:334px;top:336px;width:73px;height:28px;background:#fff4c4;"></div>
<div class="a" style="left:407px;top:336px;width:17px;height:28px;background:#fff4c4;"></div>
<div class="t" style="left:92px;top:343.84px;width:90px;text-align:right;font-size:12px;color:#111;letter-spacing:-0.2px">%0,1</div>
<div class="t" style="left:165px;top:343.84px;width:90px;text-align:right;font-size:12px;color:#111;letter-spacing:-0.2px">10,9 MB</div>
<div class="t" style="left:238px;top:343.84px;width:90px;text-align:right;font-size:12px;color:#111;letter-spacing:-0.2px">0 MB/sn</div>
<div class="t" style="left:311px;top:343.84px;width:90px;text-align:right;font-size:12px;color:#111;letter-spacing:-0.2px">0 Mb/sn</div>
<div class="a" style="left:115px;top:0px;width:1px;height:353px;background:rgba(200,170,80,0.35);"></div>
<div class="a" style="left:188px;top:0px;width:1px;height:353px;background:rgba(200,170,80,0.35);"></div>
<div class="a" style="left:261px;top:0px;width:1px;height:353px;background:rgba(200,170,80,0.35);"></div>
<div class="a" style="left:334px;top:0px;width:1px;height:353px;background:rgba(200,170,80,0.35);"></div>
<div class="a" style="left:407px;top:0px;width:1px;height:353px;background:rgba(200,170,80,0.35);"></div>
</div>
<div class="a" style="left:1575px;top:386px;width:17px;height:353px;background:#f0f0f0;"></div>
<svg style="left:1579px;top:391px;" width="9" height="5" viewBox="0 0 9 5"><path d="M0.5 4.5 L4.5 0.5 L8.5 4.5" fill="none" stroke="#555" stroke-width="1.2"/></svg>
<div class="a" style="left:1576px;top:404px;width:15px;height:24px;background:#cdcdcd;"></div>
<svg style="left:1579px;top:728px;" width="9" height="5" viewBox="0 0 9 5"><path d="M0.5 0.5 L4.5 4.5 L8.5 0.5" fill="none" stroke="#555" stroke-width="1.2"/></svg>
<div class="a" style="left:1151px;top:739px;width:424px;height:17px;background:#f0f0f0;"></div>
<div class="a" style="left:1575px;top:739px;width:17px;height:17px;background:#ffffff;"></div>
<div class="a" style="left:1268px;top:741px;width:139px;height:14px;background:#cdcdcd;"></div>
<svg style="left:1157px;top:743px;" width="5" height="9" viewBox="0 0 5 9"><path d="M4.5 0.5 L0.5 4.5 L4.5 8.5" fill="none" stroke="#555" stroke-width="1.2"/></svg>
<svg style="left:1565px;top:743px;" width="5" height="9" viewBox="0 0 5 9"><path d="M0.5 0.5 L4.5 4.5 L0.5 8.5" fill="none" stroke="#555" stroke-width="1.2"/></svg>
<div class="a" style="left:1151px;top:756px;width:441px;height:1px;background:#a0a0a0;"></div>
<svg style="left:1158px;top:770px;" width="20" height="20" viewBox="0 0 20 20"><circle cx="10" cy="10" r="9.3" fill="none" stroke="#9a9a9a" stroke-width="1"/><path d="M5.5 12 L10 7.5 L14.5 12" fill="none" stroke="#9a9a9a" stroke-width="1.2"/></svg>
<div class="t" style="left:1185px;top:774.27px;font-size:11.5px;color:#111111;font-weight:normal;font-family:'Liberation Sans',sans-serif;">Daha az ayrıntı</div>
<div class="a" style="left:1491px;top:770px;width:92px;height:21px;background:#cccccc;border:1px solid #bdbdbd"></div>
<div class="t" style="left:1495px;top:774.77px;font-size:11.5px;color:#838383;font-weight:normal;font-family:'Liberation Sans',sans-serif;">Görevi sonlandır</div>
<div class="a" style="left:1123px;top:381px;width:490px;height:41px;border:5px solid #ec1c24;"></div>
</body></html>
